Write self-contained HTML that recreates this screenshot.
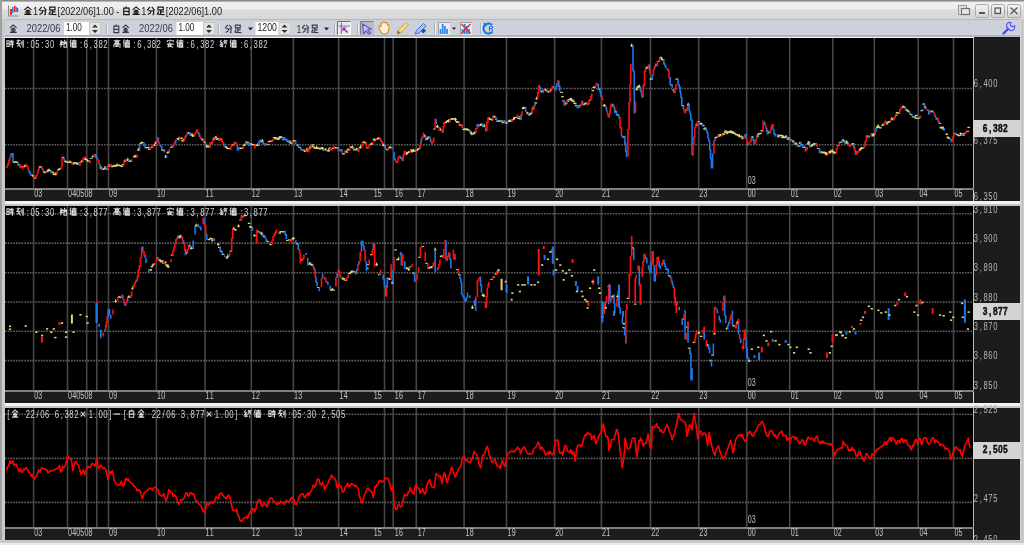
<!DOCTYPE html><html><head><meta charset="utf-8"><style>html,body{margin:0;padding:0;width:1024px;height:545px;overflow:hidden;background:#d4d4d4}svg{display:block;filter:blur(0.35px)}</style></head><body><svg width="1024" height="545" viewBox="0 0 1024 545"><defs><linearGradient id="tb" x1="0" y1="0" x2="0" y2="1"><stop offset="0" stop-color="#f0f0f0"/><stop offset="0.4" stop-color="#ededed"/><stop offset="0.46" stop-color="#dcdcdc"/><stop offset="1" stop-color="#d6d6d6"/></linearGradient><linearGradient id="btn" x1="0" y1="0" x2="0" y2="1"><stop offset="0" stop-color="#f4f4f4"/><stop offset="0.5" stop-color="#e6e6e6"/><stop offset="1" stop-color="#d0d0d0"/></linearGradient></defs><g shape-rendering="crispEdges"><rect x="0" y="0" width="1024" height="545" fill="#d8d8d8"/><rect x="0" y="0" width="1024" height="1" fill="#8a8a8a"/><rect x="1" y="1" width="1022" height="1" fill="#b4b4b4"/><rect x="0" y="0" width="1" height="545" fill="#9a9a9a"/><rect x="1" y="2" width="1022" height="17" fill="url(#tb)"/><rect x="1" y="19" width="1022" height="1" fill="#b8b8b8"/><rect x="5" y="20" width="1015" height="15" fill="#cdd1da"/><rect x="5" y="34" width="1015" height="1" fill="#d2d6dc"/><rect x="5" y="35" width="1015" height="1" fill="#a8b0bc"/><rect x="5" y="36" width="1015" height="1" fill="#b8bcc4"/><rect x="5" y="37" width="969" height="1" fill="#f4f4f4"/><rect x="974" y="37" width="46" height="1" fill="#141414"/></g><g><path d="M8.5,5.5V16H18.5" fill="none" stroke="#8a8a8a" stroke-width="1"/><rect x="10" y="9" width="2" height="6" fill="#ff2020"/><rect x="12" y="7" width="1.6" height="6" fill="#3080ff"/><rect x="14" y="6" width="1.6" height="6" fill="#ff2020"/><rect x="15.6" y="7" width="1.4" height="5" fill="#3080ff"/><rect x="17" y="8" width="1.2" height="4" fill="#ff2020"/></g><path d="M1,4L5,0.5L9,4M3,4.5H7M2,6.3H8M5,4.5V9.3M3,7.3L3.8,8.6M7,7.3L6.2,8.6M1,9.3H9" transform="translate(23.40,6.50) scale(0.892,0.850)" fill="none" stroke="#1a1a1a" stroke-width="1.353"/><text x="39.64" y="0" transform="translate(0,15.00) scale(0.835,1)" font-family="Liberation Sans" font-size="11" fill="#1a1a1a" xml:space="preserve">1</text><path d="M4,0.5L0.8,4.5M6,0.5L9.2,4.5M2.2,5H8V9.2L6.8,9.5M5,5L4.5,7.5L1.5,9.5" transform="translate(38.21,6.50) scale(0.892,0.850)" fill="none" stroke="#1a1a1a" stroke-width="1.353"/><path d="M2,0.7H8V4H2ZM5,4V9M5,6.3H8.5M3,5.5L1,9.5M1.5,9L9.5,9.5" transform="translate(47.91,6.50) scale(0.892,0.850)" fill="none" stroke="#1a1a1a" stroke-width="1.353"/><text x="68.99" y="0" transform="translate(0,15.00) scale(0.835,1)" font-family="Liberation Sans" font-size="11" fill="#1a1a1a" xml:space="preserve">[2022/06]1.00 - </text><path d="M5.2,0L4.2,1.8M2,2H8V9.5H2ZM2,5.7H8" transform="translate(121.95,6.50) scale(0.892,0.850)" fill="none" stroke="#1a1a1a" stroke-width="1.353"/><path d="M1,4L5,0.5L9,4M3,4.5H7M2,6.3H8M5,4.5V9.3M3,7.3L3.8,8.6M7,7.3L6.2,8.6M1,9.3H9" transform="translate(131.65,6.50) scale(0.892,0.850)" fill="none" stroke="#1a1a1a" stroke-width="1.353"/><text x="169.28" y="0" transform="translate(0,15.00) scale(0.835,1)" font-family="Liberation Sans" font-size="11" fill="#1a1a1a" xml:space="preserve">1</text><path d="M4,0.5L0.8,4.5M6,0.5L9.2,4.5M2.2,5H8V9.2L6.8,9.5M5,5L4.5,7.5L1.5,9.5" transform="translate(146.45,6.50) scale(0.892,0.850)" fill="none" stroke="#1a1a1a" stroke-width="1.353"/><path d="M2,0.7H8V4H2ZM5,4V9M5,6.3H8.5M3,5.5L1,9.5M1.5,9L9.5,9.5" transform="translate(156.15,6.50) scale(0.892,0.850)" fill="none" stroke="#1a1a1a" stroke-width="1.353"/><text x="198.63" y="0" transform="translate(0,15.00) scale(0.835,1)" font-family="Liberation Sans" font-size="11" fill="#1a1a1a" xml:space="preserve">[2022/06]1.00</text><g><rect x="958.5" y="5.5" width="8" height="9" fill="#e0e0e0" stroke="#9a9a9a"/><rect x="961.5" y="8.5" width="8" height="6" fill="#e6e6e6" stroke="#707070" stroke-width="1.2"/><rect x="975.5" y="4.5" width="13" height="13" rx="2" fill="url(#btn)" stroke="#a8a8a8"/><rect x="979" y="12" width="6" height="2" fill="#555"/><rect x="991.5" y="4.5" width="13" height="13" rx="2" fill="url(#btn)" stroke="#a8a8a8"/><rect x="995" y="8" width="5.5" height="5.5" fill="none" stroke="#505050" stroke-width="1.2"/><rect x="1007.5" y="4.5" width="13" height="13" rx="2" fill="url(#btn)" stroke="#a8a8a8"/><path d="M1010.5,7.5L1017.5,14M1017.5,7.5L1010.5,14" stroke="#555" stroke-width="1.3"/></g><path d="M1,4L5,0.5L9,4M3,4.5H7M2,6.3H8M5,4.5V9.3M3,7.3L3.8,8.6M7,7.3L6.2,8.6M1,9.3H9" transform="translate(9.00,24.50) scale(0.850,0.850)" fill="none" stroke="#3a3a48" stroke-width="1.412"/><text x="28.19" y="0" transform="translate(0,32.00) scale(0.94,1)" font-family="Liberation Sans" font-size="10" fill="#3a3a48" xml:space="preserve">2022/06</text><rect x="64" y="22" width="37" height="13" fill="#ffffff"/><text x="80.49" y="0" transform="translate(0,30.80) scale(0.82,1)" font-family="Liberation Sans" font-size="10" fill="#202020" xml:space="preserve">1.00</text><rect x="89.5" y="22.5" width="11" height="12" fill="#e4e4e4" stroke="#c8c8c8"/><path d="M92,27.5L95,24.5L98,27.5ZM92,30L95,33L98,30Z" fill="#303030"/><rect x="106" y="23" width="1" height="11" fill="#a8aeb8"/><rect x="107" y="23" width="1" height="11" fill="#eef0f4"/><path d="M5.2,0L4.2,1.8M2,2H8V9.5H2ZM2,5.7H8" transform="translate(112.30,24.50) scale(0.807,0.850)" fill="none" stroke="#3a3a48" stroke-width="1.412"/><path d="M1,4L5,0.5L9,4M3,4.5H7M2,6.3H8M5,4.5V9.3M3,7.3L3.8,8.6M7,7.3L6.2,8.6M1,9.3H9" transform="translate(121.60,24.50) scale(0.807,0.850)" fill="none" stroke="#3a3a48" stroke-width="1.412"/><text x="147.87" y="0" transform="translate(0,32.00) scale(0.94,1)" font-family="Liberation Sans" font-size="10" fill="#3a3a48" xml:space="preserve">2022/06</text><rect x="176.5" y="22" width="38.5" height="13" fill="#ffffff"/><text x="217.68" y="0" transform="translate(0,30.80) scale(0.82,1)" font-family="Liberation Sans" font-size="10" fill="#202020" xml:space="preserve">1.00</text><rect x="203.5" y="22.5" width="11" height="12" fill="#e4e4e4" stroke="#c8c8c8"/><path d="M206,27.5L209,24.5L212,27.5ZM206,30L209,33L212,30Z" fill="#303030"/><rect x="218" y="23" width="1" height="11" fill="#a8aeb8"/><rect x="219" y="23" width="1" height="11" fill="#eef0f4"/><path d="M4,0.5L0.8,4.5M6,0.5L9.2,4.5M2.2,5H8V9.2L6.8,9.5M5,5L4.5,7.5L1.5,9.5" transform="translate(224.50,24.50) scale(0.807,0.850)" fill="none" stroke="#3a3a48" stroke-width="1.412"/><path d="M2,0.7H8V4H2ZM5,4V9M5,6.3H8.5M3,5.5L1,9.5M1.5,9L9.5,9.5" transform="translate(233.80,24.50) scale(0.807,0.850)" fill="none" stroke="#3a3a48" stroke-width="1.412"/><path d="M248,27.5H253L250.5,30.5Z" fill="#202020"/><rect x="255.5" y="22" width="35.0" height="13" fill="#ffffff"/><text x="294.29" y="0" transform="translate(0,30.80) scale(0.875,1)" font-family="Liberation Sans" font-size="10" fill="#202020" xml:space="preserve">1200</text><rect x="279.0" y="22.5" width="11" height="12" fill="#e4e4e4" stroke="#c8c8c8"/><path d="M281.5,27.5L284.5,24.5L287.5,27.5ZM281.5,30L284.5,33L287.5,30Z" fill="#303030"/><text x="336.93" y="0" transform="translate(0,33.00) scale(0.88,1)" font-family="Liberation Sans" font-size="10" fill="#3a3a48" xml:space="preserve">1</text><path d="M4,0.5L0.8,4.5M6,0.5L9.2,4.5M2.2,5H8V9.2L6.8,9.5M5,5L4.5,7.5L1.5,9.5" transform="translate(301.39,24.50) scale(0.807,0.850)" fill="none" stroke="#3a3a48" stroke-width="1.412"/><path d="M2,0.7H8V4H2ZM5,4V9M5,6.3H8.5M3,5.5L1,9.5M1.5,9L9.5,9.5" transform="translate(310.69,24.50) scale(0.807,0.850)" fill="none" stroke="#3a3a48" stroke-width="1.412"/><path d="M324,27.5H329L326.5,30.5Z" fill="#202020"/><rect x="334" y="23" width="1" height="11" fill="#a8aeb8"/><rect x="335" y="23" width="1" height="11" fill="#eef0f4"/><rect x="337" y="21" width="14" height="14" fill="#ecece4"/><path d="M337.5,34.5V21.5H350.5" fill="none" stroke="#707070"/><path d="M338,34.5H350.5V22" fill="none" stroke="#ffffff" stroke-width="0.8"/><path d="M341.3,22.5V34M338.5,26H350" stroke="#7070d8" stroke-width="1.2"/><path d="M347.5,32.5L343.5,28.5" stroke="#a020b0" stroke-width="1.6"/><path d="M342.5,27.5H346.5L342.5,31.5Z" fill="#a020b0"/><rect x="357" y="23" width="1" height="11" fill="#a8aeb8"/><rect x="358" y="23" width="1" height="11" fill="#eef0f4"/><rect x="360" y="21" width="14" height="14" fill="#b8bcc4"/><path d="M360.5,34.5V21.5H373.5" fill="none" stroke="#787c84"/><path d="M362.5,24L371,29L367.5,29.8L370.5,32.8L369,34L366,31L363.5,33.5Z" fill="#c8c0f8" stroke="#6050c8" stroke-width="1.1"/><path d="M379,28C378,26 380,25 381,27L381,23.5C381,22.5 382.5,22.5 382.5,23.5L383,22.5C383,21.5 384.8,21.5 384.8,22.5L385.5,23C385.5,22 387,22 387,23L387.5,25C388,24.5 389.5,24.5 389,26L388.5,31C388,33 386.5,34 384,34C381.5,34 380.5,32 379,28Z" fill="#fff2d8" stroke="#d89030" stroke-width="1.1"/><path d="M397,34L398,30.5L406,22.5L408.5,25L400.5,33Z" fill="#f8d890" stroke="#e0a030" stroke-width="1"/><path d="M397,34L398,30.5L400.5,33Z" fill="#a06020"/><path d="M415,34L416.5,30.5L423.5,23.5L426,26L419,33Z" fill="#a8c8f8" stroke="#3870d8" stroke-width="1"/><path d="M421,31L424,28.5L426,31L423,33.5Z" fill="#2050a0"/><rect x="434" y="23" width="1" height="11" fill="#a8aeb8"/><rect x="435" y="23" width="1" height="11" fill="#eef0f4"/><rect x="438" y="22" width="12" height="13" fill="#e8eaee"/><path d="M438.5,35V22.5H450" fill="none" stroke="#909090" stroke-width="0.8"/><path d="M440.5,34V29M442.7,34V24M444.9,34V26M447.1,34V29" stroke="#2888f0" stroke-width="1.7"/><path d="M452,27.5H456L454,30Z" fill="#202020"/><rect x="460" y="22" width="12" height="13" fill="#e8eaee"/><path d="M460.5,35V22.5H472" fill="none" stroke="#909090" stroke-width="0.8"/><path d="M462.5,34V29M464.7,34V24M466.9,34V26M469.1,34V29" stroke="#2888f0" stroke-width="1.7"/><path d="M461.5,24L470.5,33.5M470.5,24L461.5,33.5" stroke="#e83030" stroke-width="1.4"/><rect x="480" y="23" width="1" height="11" fill="#a8aeb8"/><rect x="481" y="23" width="1" height="11" fill="#eef0f4"/><path d="M492,25A5,5 0 1 0 492.5,31.5" fill="none" stroke="#1878e0" stroke-width="2"/><path d="M483.5,22.5L487.5,25L484,27.5Z" fill="#1878e0"/><text x="488.5" y="31" font-family="Liberation Sans" font-size="7" font-weight="bold" fill="#1878e0">R</text><path d="M1003.5,33.5L1009.5,27.5" stroke="#4848f0" stroke-width="2.4" stroke-linecap="round"/><path d="M1008.5,28.5A3,3 0 0 1 1011,22.8L1010.2,25.3L1012.2,26.8L1014.5,25.8A3,3 0 0 1 1008.5,28.5Z" fill="#d0d0ff" stroke="#5050f0" stroke-width="1.1"/><g shape-rendering="crispEdges"><rect x="5" y="38" width="968" height="150" fill="#000"/><rect x="973" y="38" width="1" height="152" fill="#b8b8b8"/><rect x="974" y="38" width="46" height="163" fill="#1c1c1c"/><rect x="5" y="188" width="969" height="2" fill="#808080"/><rect x="5" y="190" width="968" height="11" fill="#1c1c1c"/></g><path d="M33.60,38V188M67.50,38V188M86.70,38V188M96.80,38V188M108.50,38V188M156.40,38V188M205.00,38V188M251.30,38V188M293.40,38V188M338.60,38V188M384.50,38V188M393.20,38V188M416.30,38V188M464.10,38V188M506.50,38V188M554.60,38V188M601.40,38V188M650.50,38V188M698.70,38V188M746.70,38V188M789.70,38V188M832.80,38V188M874.30,38V188M918.20,38V188M953.50,38V188" stroke="#464646" stroke-width="1.6"/><path d="M5,88.50H973M5,144.75H973" stroke="#5c5c5c" stroke-width="1.6" stroke-dasharray="1.7,1.05"/><text x="53.31 59.34" y="0" transform="translate(0,196.70) scale(0.68,1)" text-anchor="middle" font-family="Liberation Sans" font-size="10.5" font-weight="normal" fill="#c4c4c4">03</text><text x="103.01 109.04 115.07 121.10 127.13 133.16" y="0" transform="translate(0,196.70) scale(0.68,1)" text-anchor="middle" font-family="Liberation Sans" font-size="10.5" font-weight="normal" fill="#c4c4c4">040508</text><text x="163.31 169.34" y="0" transform="translate(0,196.70) scale(0.68,1)" text-anchor="middle" font-family="Liberation Sans" font-size="10.5" font-weight="normal" fill="#c4c4c4">09</text><text x="233.90 239.93" y="0" transform="translate(0,196.70) scale(0.68,1)" text-anchor="middle" font-family="Liberation Sans" font-size="10.5" font-weight="normal" fill="#c4c4c4">10</text><text x="305.22 311.25" y="0" transform="translate(0,196.70) scale(0.68,1)" text-anchor="middle" font-family="Liberation Sans" font-size="10.5" font-weight="normal" fill="#c4c4c4">11</text><text x="373.31 379.34" y="0" transform="translate(0,196.70) scale(0.68,1)" text-anchor="middle" font-family="Liberation Sans" font-size="10.5" font-weight="normal" fill="#c4c4c4">12</text><text x="435.37 441.40" y="0" transform="translate(0,196.70) scale(0.68,1)" text-anchor="middle" font-family="Liberation Sans" font-size="10.5" font-weight="normal" fill="#c4c4c4">13</text><text x="502.28 508.31" y="0" transform="translate(0,196.70) scale(0.68,1)" text-anchor="middle" font-family="Liberation Sans" font-size="10.5" font-weight="normal" fill="#c4c4c4">14</text><text x="552.57 558.60" y="0" transform="translate(0,196.70) scale(0.68,1)" text-anchor="middle" font-family="Liberation Sans" font-size="10.5" font-weight="normal" fill="#c4c4c4">15</text><text x="583.60 589.63" y="0" transform="translate(0,196.70) scale(0.68,1)" text-anchor="middle" font-family="Liberation Sans" font-size="10.5" font-weight="normal" fill="#c4c4c4">16</text><text x="617.13 623.16" y="0" transform="translate(0,196.70) scale(0.68,1)" text-anchor="middle" font-family="Liberation Sans" font-size="10.5" font-weight="normal" fill="#c4c4c4">17</text><text x="687.57 693.60" y="0" transform="translate(0,196.70) scale(0.68,1)" text-anchor="middle" font-family="Liberation Sans" font-size="10.5" font-weight="normal" fill="#c4c4c4">18</text><text x="749.34 755.37" y="0" transform="translate(0,196.70) scale(0.68,1)" text-anchor="middle" font-family="Liberation Sans" font-size="10.5" font-weight="normal" fill="#c4c4c4">19</text><text x="819.49 825.51" y="0" transform="translate(0,196.70) scale(0.68,1)" text-anchor="middle" font-family="Liberation Sans" font-size="10.5" font-weight="normal" fill="#c4c4c4">20</text><text x="888.31 894.34" y="0" transform="translate(0,196.70) scale(0.68,1)" text-anchor="middle" font-family="Liberation Sans" font-size="10.5" font-weight="normal" fill="#c4c4c4">21</text><text x="960.66 966.69" y="0" transform="translate(0,196.70) scale(0.68,1)" text-anchor="middle" font-family="Liberation Sans" font-size="10.5" font-weight="normal" fill="#c4c4c4">22</text><text x="1031.40 1037.43" y="0" transform="translate(0,196.70) scale(0.68,1)" text-anchor="middle" font-family="Liberation Sans" font-size="10.5" font-weight="normal" fill="#c4c4c4">23</text><text x="1102.43 1108.46" y="0" transform="translate(0,196.70) scale(0.68,1)" text-anchor="middle" font-family="Liberation Sans" font-size="10.5" font-weight="normal" fill="#c4c4c4">00</text><text x="1165.66 1171.69" y="0" transform="translate(0,196.70) scale(0.68,1)" text-anchor="middle" font-family="Liberation Sans" font-size="10.5" font-weight="normal" fill="#c4c4c4">01</text><text x="1228.90 1234.93" y="0" transform="translate(0,196.70) scale(0.68,1)" text-anchor="middle" font-family="Liberation Sans" font-size="10.5" font-weight="normal" fill="#c4c4c4">02</text><text x="1290.07 1296.10" y="0" transform="translate(0,196.70) scale(0.68,1)" text-anchor="middle" font-family="Liberation Sans" font-size="10.5" font-weight="normal" fill="#c4c4c4">03</text><text x="1355.07 1361.10" y="0" transform="translate(0,196.70) scale(0.68,1)" text-anchor="middle" font-family="Liberation Sans" font-size="10.5" font-weight="normal" fill="#c4c4c4">04</text><text x="1406.54 1412.57" y="0" transform="translate(0,196.70) scale(0.68,1)" text-anchor="middle" font-family="Liberation Sans" font-size="10.5" font-weight="normal" fill="#c4c4c4">05</text><text x="1355.45 1362.19 1368.92 1375.66 1382.40" y="0" transform="translate(0,87.00) scale(0.72,1)" text-anchor="middle" font-family="Liberation Sans" font-size="10.5" font-weight="normal" fill="#b8b8b8">6,400</text><text x="1355.45 1362.19 1368.92 1375.66 1382.40" y="0" transform="translate(0,144.00) scale(0.72,1)" text-anchor="middle" font-family="Liberation Sans" font-size="10.5" font-weight="normal" fill="#b8b8b8">6,375</text><text x="1355.45 1362.19 1368.92 1375.66 1382.40" y="0" transform="translate(0,200.00) scale(0.72,1)" text-anchor="middle" font-family="Liberation Sans" font-size="10.5" font-weight="normal" fill="#b8b8b8">6,350</text><rect x="973" y="120.30000000000001" width="47" height="17" fill="#d4d4d4" shape-rendering="crispEdges"/><text x="1231.31 1237.69 1244.06 1250.44 1256.81" y="0" transform="translate(0,132.00) scale(0.8,1)" text-anchor="middle" font-family="Liberation Sans" font-size="10.5" font-weight="bold" fill="#101010" stroke="#101010" stroke-width="0.45">6,382</text><path d="M0.5,1.5H3.5V8.5H0.5ZM0.5,5H3.5M4.5,2.3H9.5M7,0.3V4M4.5,4H9.5M4.5,6H9.5M8,4.5V9.5L7,9.5M5.5,7.3L6.3,8.3" transform="translate(6.50,39.50) scale(0.754,0.820)" fill="none" stroke="#d6d6d6" stroke-width="1.402"/><path d="M3,0V1M0.5,1.5H6M3,2L1,4.8H5L1.5,8.5M3.5,6.5L6,9.5M7.5,2V7M9.3,0.5V9.5L8.3,9.5" transform="translate(16.20,39.50) scale(0.754,0.820)" fill="none" stroke="#d6d6d6" stroke-width="1.402"/><path d="M2,0.5L0.5,6H4.5M3.2,2L1,9.5M0.5,3.5H4.5M7,0.5L5.2,3.5H9.3M8,2.5L9.5,3.5M5.5,5H9V9.5H5.5Z" transform="translate(59.85,39.50) scale(0.754,0.820)" fill="none" stroke="#d6d6d6" stroke-width="1.402"/><path d="M2,0L0.5,4M1.5,3V9.5M3,1.5H9.5M6,0V3M4,3H8.5V8.3H4ZM4,4.8H8.5M4,6.5H8.5M3.5,3V9.5H9.5" transform="translate(69.55,39.50) scale(0.754,0.820)" fill="none" stroke="#d6d6d6" stroke-width="1.402"/><path d="M5,0V1.3M0.5,1.5H9.5M3,2.5H7V4H3ZM1,5.2V9.5M1,5.2H9V9.5L8,9.5M3.5,6.5H6.5V8.5H3.5Z" transform="translate(113.20,39.50) scale(0.754,0.820)" fill="none" stroke="#d6d6d6" stroke-width="1.402"/><path d="M2,0L0.5,4M1.5,3V9.5M3,1.5H9.5M6,0V3M4,3H8.5V8.3H4ZM4,4.8H8.5M4,6.5H8.5M3.5,3V9.5H9.5" transform="translate(122.90,39.50) scale(0.754,0.820)" fill="none" stroke="#d6d6d6" stroke-width="1.402"/><path d="M5,0V1.5M1,3V1.5H9V3M4.5,3.5L2.2,7.8L9,9.5M0.5,5.7H9.5M7.2,5.7L1.5,9.5" transform="translate(166.55,39.50) scale(0.754,0.820)" fill="none" stroke="#d6d6d6" stroke-width="1.402"/><path d="M2,0L0.5,4M1.5,3V9.5M3,1.5H9.5M6,0V3M4,3H8.5V8.3H4ZM4,4.8H8.5M4,6.5H8.5M3.5,3V9.5H9.5" transform="translate(176.25,39.50) scale(0.754,0.820)" fill="none" stroke="#d6d6d6" stroke-width="1.402"/><path d="M2,0.5L0.5,3L3,4L0.5,6.5H4.2M3.3,5.3L4.2,6.5M2.4,6.5V9.5M1,7.8L0.5,9M3.5,7.8L4.2,9M6.5,0.5L5,3M6,1.5H9L5,5.2M6.8,3L9.5,5.2M7,6.5L8,7.2M6.5,8.5L8,9.5" transform="translate(219.90,39.50) scale(0.754,0.820)" fill="none" stroke="#d6d6d6" stroke-width="1.402"/><path d="M2,0L0.5,4M1.5,3V9.5M3,1.5H9.5M6,0V3M4,3H8.5V8.3H4ZM4,4.8H8.5M4,6.5H8.5M3.5,3V9.5H9.5" transform="translate(229.60,39.50) scale(0.754,0.820)" fill="none" stroke="#d6d6d6" stroke-width="1.402"/><text x="37.60 44.16 50.71 57.26 63.82 70.37 109.70 116.25 122.80 129.36 135.91 142.47 181.79 188.34 194.90 201.45 208.01 214.56 253.89 260.44 266.99 273.55 280.10 286.66 325.98 332.53 339.09 345.64 352.20 358.75" y="0" transform="translate(0,47.70) scale(0.74,1)" text-anchor="middle" font-family="Liberation Sans" font-size="10.5" font-weight="normal" fill="#d6d6d6">:05:30:6,382:6,382:6,382:6,382</text><g shape-rendering="crispEdges"><rect x="5" y="201" width="1015" height="3" fill="#f2f2f2"/><rect x="5" y="204" width="1015" height="2" fill="#c4c4c4"/></g><g shape-rendering="crispEdges"><rect x="5" y="206" width="968" height="184" fill="#000"/><rect x="973" y="206" width="1" height="186" fill="#b8b8b8"/><rect x="974" y="206" width="46" height="197" fill="#1c1c1c"/><rect x="5" y="390" width="969" height="2" fill="#808080"/><rect x="5" y="392" width="968" height="11" fill="#1c1c1c"/></g><path d="M33.60,206V390M67.50,206V390M86.70,206V390M96.80,206V390M108.50,206V390M156.40,206V390M205.00,206V390M251.30,206V390M293.40,206V390M338.60,206V390M384.50,206V390M393.20,206V390M416.30,206V390M464.10,206V390M506.50,206V390M554.60,206V390M601.40,206V390M650.50,206V390M698.70,206V390M746.70,206V390M789.70,206V390M832.80,206V390M874.30,206V390M918.20,206V390M953.50,206V390" stroke="#464646" stroke-width="1.6"/><path d="M5,213.80H973M5,243.10H973M5,272.80H973M5,302.00H973M5,331.20H973M5,360.60H973" stroke="#5c5c5c" stroke-width="1.6" stroke-dasharray="1.7,1.05"/><text x="53.31 59.34" y="0" transform="translate(0,398.70) scale(0.68,1)" text-anchor="middle" font-family="Liberation Sans" font-size="10.5" font-weight="normal" fill="#c4c4c4">03</text><text x="103.01 109.04 115.07 121.10 127.13 133.16" y="0" transform="translate(0,398.70) scale(0.68,1)" text-anchor="middle" font-family="Liberation Sans" font-size="10.5" font-weight="normal" fill="#c4c4c4">040508</text><text x="163.31 169.34" y="0" transform="translate(0,398.70) scale(0.68,1)" text-anchor="middle" font-family="Liberation Sans" font-size="10.5" font-weight="normal" fill="#c4c4c4">09</text><text x="233.90 239.93" y="0" transform="translate(0,398.70) scale(0.68,1)" text-anchor="middle" font-family="Liberation Sans" font-size="10.5" font-weight="normal" fill="#c4c4c4">10</text><text x="305.22 311.25" y="0" transform="translate(0,398.70) scale(0.68,1)" text-anchor="middle" font-family="Liberation Sans" font-size="10.5" font-weight="normal" fill="#c4c4c4">11</text><text x="373.31 379.34" y="0" transform="translate(0,398.70) scale(0.68,1)" text-anchor="middle" font-family="Liberation Sans" font-size="10.5" font-weight="normal" fill="#c4c4c4">12</text><text x="435.37 441.40" y="0" transform="translate(0,398.70) scale(0.68,1)" text-anchor="middle" font-family="Liberation Sans" font-size="10.5" font-weight="normal" fill="#c4c4c4">13</text><text x="502.28 508.31" y="0" transform="translate(0,398.70) scale(0.68,1)" text-anchor="middle" font-family="Liberation Sans" font-size="10.5" font-weight="normal" fill="#c4c4c4">14</text><text x="552.57 558.60" y="0" transform="translate(0,398.70) scale(0.68,1)" text-anchor="middle" font-family="Liberation Sans" font-size="10.5" font-weight="normal" fill="#c4c4c4">15</text><text x="583.60 589.63" y="0" transform="translate(0,398.70) scale(0.68,1)" text-anchor="middle" font-family="Liberation Sans" font-size="10.5" font-weight="normal" fill="#c4c4c4">16</text><text x="617.13 623.16" y="0" transform="translate(0,398.70) scale(0.68,1)" text-anchor="middle" font-family="Liberation Sans" font-size="10.5" font-weight="normal" fill="#c4c4c4">17</text><text x="687.57 693.60" y="0" transform="translate(0,398.70) scale(0.68,1)" text-anchor="middle" font-family="Liberation Sans" font-size="10.5" font-weight="normal" fill="#c4c4c4">18</text><text x="749.34 755.37" y="0" transform="translate(0,398.70) scale(0.68,1)" text-anchor="middle" font-family="Liberation Sans" font-size="10.5" font-weight="normal" fill="#c4c4c4">19</text><text x="819.49 825.51" y="0" transform="translate(0,398.70) scale(0.68,1)" text-anchor="middle" font-family="Liberation Sans" font-size="10.5" font-weight="normal" fill="#c4c4c4">20</text><text x="888.31 894.34" y="0" transform="translate(0,398.70) scale(0.68,1)" text-anchor="middle" font-family="Liberation Sans" font-size="10.5" font-weight="normal" fill="#c4c4c4">21</text><text x="960.66 966.69" y="0" transform="translate(0,398.70) scale(0.68,1)" text-anchor="middle" font-family="Liberation Sans" font-size="10.5" font-weight="normal" fill="#c4c4c4">22</text><text x="1031.40 1037.43" y="0" transform="translate(0,398.70) scale(0.68,1)" text-anchor="middle" font-family="Liberation Sans" font-size="10.5" font-weight="normal" fill="#c4c4c4">23</text><text x="1102.43 1108.46" y="0" transform="translate(0,398.70) scale(0.68,1)" text-anchor="middle" font-family="Liberation Sans" font-size="10.5" font-weight="normal" fill="#c4c4c4">00</text><text x="1165.66 1171.69" y="0" transform="translate(0,398.70) scale(0.68,1)" text-anchor="middle" font-family="Liberation Sans" font-size="10.5" font-weight="normal" fill="#c4c4c4">01</text><text x="1228.90 1234.93" y="0" transform="translate(0,398.70) scale(0.68,1)" text-anchor="middle" font-family="Liberation Sans" font-size="10.5" font-weight="normal" fill="#c4c4c4">02</text><text x="1290.07 1296.10" y="0" transform="translate(0,398.70) scale(0.68,1)" text-anchor="middle" font-family="Liberation Sans" font-size="10.5" font-weight="normal" fill="#c4c4c4">03</text><text x="1355.07 1361.10" y="0" transform="translate(0,398.70) scale(0.68,1)" text-anchor="middle" font-family="Liberation Sans" font-size="10.5" font-weight="normal" fill="#c4c4c4">04</text><text x="1406.54 1412.57" y="0" transform="translate(0,398.70) scale(0.68,1)" text-anchor="middle" font-family="Liberation Sans" font-size="10.5" font-weight="normal" fill="#c4c4c4">05</text><text x="1355.45 1362.19 1368.92 1375.66 1382.40" y="0" transform="translate(0,213.00) scale(0.72,1)" text-anchor="middle" font-family="Liberation Sans" font-size="10.5" font-weight="normal" fill="#b8b8b8">3,910</text><text x="1355.45 1362.19 1368.92 1375.66 1382.40" y="0" transform="translate(0,242.00) scale(0.72,1)" text-anchor="middle" font-family="Liberation Sans" font-size="10.5" font-weight="normal" fill="#b8b8b8">3,900</text><text x="1355.45 1362.19 1368.92 1375.66 1382.40" y="0" transform="translate(0,271.00) scale(0.72,1)" text-anchor="middle" font-family="Liberation Sans" font-size="10.5" font-weight="normal" fill="#b8b8b8">3,890</text><text x="1355.45 1362.19 1368.92 1375.66 1382.40" y="0" transform="translate(0,301.00) scale(0.72,1)" text-anchor="middle" font-family="Liberation Sans" font-size="10.5" font-weight="normal" fill="#b8b8b8">3,880</text><text x="1355.45 1362.19 1368.92 1375.66 1382.40" y="0" transform="translate(0,330.00) scale(0.72,1)" text-anchor="middle" font-family="Liberation Sans" font-size="10.5" font-weight="normal" fill="#b8b8b8">3,870</text><text x="1355.45 1362.19 1368.92 1375.66 1382.40" y="0" transform="translate(0,359.00) scale(0.72,1)" text-anchor="middle" font-family="Liberation Sans" font-size="10.5" font-weight="normal" fill="#b8b8b8">3,860</text><text x="1355.45 1362.19 1368.92 1375.66 1382.40" y="0" transform="translate(0,389.00) scale(0.72,1)" text-anchor="middle" font-family="Liberation Sans" font-size="10.5" font-weight="normal" fill="#b8b8b8">3,850</text><rect x="973" y="303.0" width="47" height="17" fill="#d4d4d4" shape-rendering="crispEdges"/><text x="1231.31 1237.69 1244.06 1250.44 1256.81" y="0" transform="translate(0,314.70) scale(0.8,1)" text-anchor="middle" font-family="Liberation Sans" font-size="10.5" font-weight="bold" fill="#101010" stroke="#101010" stroke-width="0.45">3,877</text><path d="M0.5,1.5H3.5V8.5H0.5ZM0.5,5H3.5M4.5,2.3H9.5M7,0.3V4M4.5,4H9.5M4.5,6H9.5M8,4.5V9.5L7,9.5M5.5,7.3L6.3,8.3" transform="translate(6.50,207.50) scale(0.754,0.820)" fill="none" stroke="#d6d6d6" stroke-width="1.402"/><path d="M3,0V1M0.5,1.5H6M3,2L1,4.8H5L1.5,8.5M3.5,6.5L6,9.5M7.5,2V7M9.3,0.5V9.5L8.3,9.5" transform="translate(16.20,207.50) scale(0.754,0.820)" fill="none" stroke="#d6d6d6" stroke-width="1.402"/><path d="M2,0.5L0.5,6H4.5M3.2,2L1,9.5M0.5,3.5H4.5M7,0.5L5.2,3.5H9.3M8,2.5L9.5,3.5M5.5,5H9V9.5H5.5Z" transform="translate(59.85,207.50) scale(0.754,0.820)" fill="none" stroke="#d6d6d6" stroke-width="1.402"/><path d="M2,0L0.5,4M1.5,3V9.5M3,1.5H9.5M6,0V3M4,3H8.5V8.3H4ZM4,4.8H8.5M4,6.5H8.5M3.5,3V9.5H9.5" transform="translate(69.55,207.50) scale(0.754,0.820)" fill="none" stroke="#d6d6d6" stroke-width="1.402"/><path d="M5,0V1.3M0.5,1.5H9.5M3,2.5H7V4H3ZM1,5.2V9.5M1,5.2H9V9.5L8,9.5M3.5,6.5H6.5V8.5H3.5Z" transform="translate(113.20,207.50) scale(0.754,0.820)" fill="none" stroke="#d6d6d6" stroke-width="1.402"/><path d="M2,0L0.5,4M1.5,3V9.5M3,1.5H9.5M6,0V3M4,3H8.5V8.3H4ZM4,4.8H8.5M4,6.5H8.5M3.5,3V9.5H9.5" transform="translate(122.90,207.50) scale(0.754,0.820)" fill="none" stroke="#d6d6d6" stroke-width="1.402"/><path d="M5,0V1.5M1,3V1.5H9V3M4.5,3.5L2.2,7.8L9,9.5M0.5,5.7H9.5M7.2,5.7L1.5,9.5" transform="translate(166.55,207.50) scale(0.754,0.820)" fill="none" stroke="#d6d6d6" stroke-width="1.402"/><path d="M2,0L0.5,4M1.5,3V9.5M3,1.5H9.5M6,0V3M4,3H8.5V8.3H4ZM4,4.8H8.5M4,6.5H8.5M3.5,3V9.5H9.5" transform="translate(176.25,207.50) scale(0.754,0.820)" fill="none" stroke="#d6d6d6" stroke-width="1.402"/><path d="M2,0.5L0.5,3L3,4L0.5,6.5H4.2M3.3,5.3L4.2,6.5M2.4,6.5V9.5M1,7.8L0.5,9M3.5,7.8L4.2,9M6.5,0.5L5,3M6,1.5H9L5,5.2M6.8,3L9.5,5.2M7,6.5L8,7.2M6.5,8.5L8,9.5" transform="translate(219.90,207.50) scale(0.754,0.820)" fill="none" stroke="#d6d6d6" stroke-width="1.402"/><path d="M2,0L0.5,4M1.5,3V9.5M3,1.5H9.5M6,0V3M4,3H8.5V8.3H4ZM4,4.8H8.5M4,6.5H8.5M3.5,3V9.5H9.5" transform="translate(229.60,207.50) scale(0.754,0.820)" fill="none" stroke="#d6d6d6" stroke-width="1.402"/><text x="37.60 44.16 50.71 57.26 63.82 70.37 109.70 116.25 122.80 129.36 135.91 142.47 181.79 188.34 194.90 201.45 208.01 214.56 253.89 260.44 266.99 273.55 280.10 286.66 325.98 332.53 339.09 345.64 352.20 358.75" y="0" transform="translate(0,215.70) scale(0.74,1)" text-anchor="middle" font-family="Liberation Sans" font-size="10.5" font-weight="normal" fill="#d6d6d6">:05:30:3,877:3,877:3,877:3,877</text><g shape-rendering="crispEdges"><rect x="5" y="403" width="1015" height="3" fill="#f2f2f2"/><rect x="5" y="406" width="1015" height="2" fill="#c4c4c4"/></g><g shape-rendering="crispEdges"><rect x="5" y="408" width="968" height="119" fill="#000"/><rect x="973" y="408" width="1" height="121" fill="#b8b8b8"/><rect x="974" y="408" width="46" height="132" fill="#1c1c1c"/><rect x="5" y="527" width="969" height="2" fill="#808080"/><rect x="5" y="529" width="968" height="11" fill="#1c1c1c"/></g><path d="M33.60,408V527M67.50,408V527M86.70,408V527M96.80,408V527M108.50,408V527M156.40,408V527M205.00,408V527M251.30,408V527M293.40,408V527M338.60,408V527M384.50,408V527M393.20,408V527M416.30,408V527M464.10,408V527M506.50,408V527M554.60,408V527M601.40,408V527M650.50,408V527M698.70,408V527M746.70,408V527M789.70,408V527M832.80,408V527M874.30,408V527M918.20,408V527M953.50,408V527" stroke="#464646" stroke-width="1.6"/><path d="M5,414.30H973M5,458.40H973M5,502.40H973" stroke="#5c5c5c" stroke-width="1.6" stroke-dasharray="1.7,1.05"/><text x="53.31 59.34" y="0" transform="translate(0,535.70) scale(0.68,1)" text-anchor="middle" font-family="Liberation Sans" font-size="10.5" font-weight="normal" fill="#c4c4c4">03</text><text x="103.01 109.04 115.07 121.10 127.13 133.16" y="0" transform="translate(0,535.70) scale(0.68,1)" text-anchor="middle" font-family="Liberation Sans" font-size="10.5" font-weight="normal" fill="#c4c4c4">040508</text><text x="163.31 169.34" y="0" transform="translate(0,535.70) scale(0.68,1)" text-anchor="middle" font-family="Liberation Sans" font-size="10.5" font-weight="normal" fill="#c4c4c4">09</text><text x="233.90 239.93" y="0" transform="translate(0,535.70) scale(0.68,1)" text-anchor="middle" font-family="Liberation Sans" font-size="10.5" font-weight="normal" fill="#c4c4c4">10</text><text x="305.22 311.25" y="0" transform="translate(0,535.70) scale(0.68,1)" text-anchor="middle" font-family="Liberation Sans" font-size="10.5" font-weight="normal" fill="#c4c4c4">11</text><text x="373.31 379.34" y="0" transform="translate(0,535.70) scale(0.68,1)" text-anchor="middle" font-family="Liberation Sans" font-size="10.5" font-weight="normal" fill="#c4c4c4">12</text><text x="435.37 441.40" y="0" transform="translate(0,535.70) scale(0.68,1)" text-anchor="middle" font-family="Liberation Sans" font-size="10.5" font-weight="normal" fill="#c4c4c4">13</text><text x="502.28 508.31" y="0" transform="translate(0,535.70) scale(0.68,1)" text-anchor="middle" font-family="Liberation Sans" font-size="10.5" font-weight="normal" fill="#c4c4c4">14</text><text x="552.57 558.60" y="0" transform="translate(0,535.70) scale(0.68,1)" text-anchor="middle" font-family="Liberation Sans" font-size="10.5" font-weight="normal" fill="#c4c4c4">15</text><text x="583.60 589.63" y="0" transform="translate(0,535.70) scale(0.68,1)" text-anchor="middle" font-family="Liberation Sans" font-size="10.5" font-weight="normal" fill="#c4c4c4">16</text><text x="617.13 623.16" y="0" transform="translate(0,535.70) scale(0.68,1)" text-anchor="middle" font-family="Liberation Sans" font-size="10.5" font-weight="normal" fill="#c4c4c4">17</text><text x="687.57 693.60" y="0" transform="translate(0,535.70) scale(0.68,1)" text-anchor="middle" font-family="Liberation Sans" font-size="10.5" font-weight="normal" fill="#c4c4c4">18</text><text x="749.34 755.37" y="0" transform="translate(0,535.70) scale(0.68,1)" text-anchor="middle" font-family="Liberation Sans" font-size="10.5" font-weight="normal" fill="#c4c4c4">19</text><text x="819.49 825.51" y="0" transform="translate(0,535.70) scale(0.68,1)" text-anchor="middle" font-family="Liberation Sans" font-size="10.5" font-weight="normal" fill="#c4c4c4">20</text><text x="888.31 894.34" y="0" transform="translate(0,535.70) scale(0.68,1)" text-anchor="middle" font-family="Liberation Sans" font-size="10.5" font-weight="normal" fill="#c4c4c4">21</text><text x="960.66 966.69" y="0" transform="translate(0,535.70) scale(0.68,1)" text-anchor="middle" font-family="Liberation Sans" font-size="10.5" font-weight="normal" fill="#c4c4c4">22</text><text x="1031.40 1037.43" y="0" transform="translate(0,535.70) scale(0.68,1)" text-anchor="middle" font-family="Liberation Sans" font-size="10.5" font-weight="normal" fill="#c4c4c4">23</text><text x="1102.43 1108.46" y="0" transform="translate(0,535.70) scale(0.68,1)" text-anchor="middle" font-family="Liberation Sans" font-size="10.5" font-weight="normal" fill="#c4c4c4">00</text><text x="1165.66 1171.69" y="0" transform="translate(0,535.70) scale(0.68,1)" text-anchor="middle" font-family="Liberation Sans" font-size="10.5" font-weight="normal" fill="#c4c4c4">01</text><text x="1228.90 1234.93" y="0" transform="translate(0,535.70) scale(0.68,1)" text-anchor="middle" font-family="Liberation Sans" font-size="10.5" font-weight="normal" fill="#c4c4c4">02</text><text x="1290.07 1296.10" y="0" transform="translate(0,535.70) scale(0.68,1)" text-anchor="middle" font-family="Liberation Sans" font-size="10.5" font-weight="normal" fill="#c4c4c4">03</text><text x="1355.07 1361.10" y="0" transform="translate(0,535.70) scale(0.68,1)" text-anchor="middle" font-family="Liberation Sans" font-size="10.5" font-weight="normal" fill="#c4c4c4">04</text><text x="1406.54 1412.57" y="0" transform="translate(0,535.70) scale(0.68,1)" text-anchor="middle" font-family="Liberation Sans" font-size="10.5" font-weight="normal" fill="#c4c4c4">05</text><text x="1355.45 1362.19 1368.92 1375.66 1382.40" y="0" transform="translate(0,413.00) scale(0.72,1)" text-anchor="middle" font-family="Liberation Sans" font-size="10.5" font-weight="normal" fill="#b8b8b8">2,525</text><text x="1355.45 1362.19 1368.92 1375.66 1382.40" y="0" transform="translate(0,502.00) scale(0.72,1)" text-anchor="middle" font-family="Liberation Sans" font-size="10.5" font-weight="normal" fill="#b8b8b8">2,475</text><text x="1355.45 1362.19 1368.92 1375.66 1382.40" y="0" transform="translate(0,543.00) scale(0.72,1)" text-anchor="middle" font-family="Liberation Sans" font-size="10.5" font-weight="normal" fill="#b8b8b8">2,450</text><rect x="973" y="441.5" width="47" height="17" fill="#d4d4d4" shape-rendering="crispEdges"/><text x="1231.31 1237.69 1244.06 1250.44 1256.81" y="0" transform="translate(0,453.20) scale(0.8,1)" text-anchor="middle" font-family="Liberation Sans" font-size="10.5" font-weight="bold" fill="#101010" stroke="#101010" stroke-width="0.45">2,505</text><path d="M1,4L5,0.5L9,4M3,4.5H7M2,6.3H8M5,4.5V9.3M3,7.3L3.8,8.6M7,7.3L6.2,8.6M1,9.3H9" transform="translate(11.35,409.50) scale(0.754,0.820)" fill="none" stroke="#d6d6d6" stroke-width="1.402"/><path d="M2,2.5L8,8.5M8,2.5L2,8.5" transform="translate(79.25,409.50) scale(0.754,0.820)" fill="none" stroke="#d6d6d6" stroke-width="1.402"/><path d="M1,5.5H9" transform="translate(113.20,409.50) scale(0.754,0.820)" fill="none" stroke="#d6d6d6" stroke-width="1.402"/><path d="M5.2,0L4.2,1.8M2,2H8V9.5H2ZM2,5.7H8" transform="translate(127.75,409.50) scale(0.754,0.820)" fill="none" stroke="#d6d6d6" stroke-width="1.402"/><path d="M1,4L5,0.5L9,4M3,4.5H7M2,6.3H8M5,4.5V9.3M3,7.3L3.8,8.6M7,7.3L6.2,8.6M1,9.3H9" transform="translate(137.45,409.50) scale(0.754,0.820)" fill="none" stroke="#d6d6d6" stroke-width="1.402"/><path d="M2,2.5L8,8.5M8,2.5L2,8.5" transform="translate(205.35,409.50) scale(0.754,0.820)" fill="none" stroke="#d6d6d6" stroke-width="1.402"/><path d="M2,0.5L0.5,3L3,4L0.5,6.5H4.2M3.3,5.3L4.2,6.5M2.4,6.5V9.5M1,7.8L0.5,9M3.5,7.8L4.2,9M6.5,0.5L5,3M6,1.5H9L5,5.2M6.8,3L9.5,5.2M7,6.5L8,7.2M6.5,8.5L8,9.5" transform="translate(244.15,409.50) scale(0.754,0.820)" fill="none" stroke="#d6d6d6" stroke-width="1.402"/><path d="M2,0L0.5,4M1.5,3V9.5M3,1.5H9.5M6,0V3M4,3H8.5V8.3H4ZM4,4.8H8.5M4,6.5H8.5M3.5,3V9.5H9.5" transform="translate(253.85,409.50) scale(0.754,0.820)" fill="none" stroke="#d6d6d6" stroke-width="1.402"/><path d="M0.5,1.5H3.5V8.5H0.5ZM0.5,5H3.5M4.5,2.3H9.5M7,0.3V4M4.5,4H9.5M4.5,6H9.5M8,4.5V9.5L7,9.5M5.5,7.3L6.3,8.3" transform="translate(268.40,409.50) scale(0.754,0.820)" fill="none" stroke="#d6d6d6" stroke-width="1.402"/><path d="M3,0V1M0.5,1.5H6M3,2L1,4.8H5L1.5,8.5M3.5,6.5L6,9.5M7.5,2V7M9.3,0.5V9.5L8.3,9.5" transform="translate(278.10,409.50) scale(0.754,0.820)" fill="none" stroke="#d6d6d6" stroke-width="1.402"/><text x="11.39 37.60 44.16 50.71 57.26 63.82 76.93 83.48 90.03 96.59 103.14 122.80 129.36 135.91 142.47 149.02 168.68 208.01 214.56 221.11 227.67 234.22 247.33 253.89 260.44 266.99 273.55 293.21 299.76 306.32 312.87 319.43 391.52 398.07 404.63 411.18 417.74 424.29 437.40 443.95 450.51 457.06 463.61" y="0" transform="translate(0,417.70) scale(0.74,1)" text-anchor="middle" font-family="Liberation Sans" font-size="10.5" font-weight="normal" fill="#d6d6d6">[22/066,3821.00][22/063,8771.00]:05:302,505</text><g shape-rendering="crispEdges"><rect x="1020" y="19" width="4" height="521" fill="#d0d0d0"/><rect x="1022" y="19" width="1" height="521" fill="#bcbcbc"/><rect x="1" y="19" width="4" height="521" fill="#cacaca"/><rect x="0" y="0" width="2" height="540" fill="#a0a0a0"/><rect x="0" y="540" width="1024" height="3" fill="#c8c8c8"/><rect x="0" y="543" width="1024" height="2" fill="#ececec"/></g><text x="1102.43 1108.46" y="0" transform="translate(0,184.00) scale(0.68,1)" text-anchor="middle" font-family="Liberation Sans" font-size="10.5" font-weight="normal" fill="#c4c4c4">03</text><text x="1102.43 1108.46" y="0" transform="translate(0,386.00) scale(0.68,1)" text-anchor="middle" font-family="Liberation Sans" font-size="10.5" font-weight="normal" fill="#c4c4c4">03</text><text x="1102.43 1108.46" y="0" transform="translate(0,523.00) scale(0.68,1)" text-anchor="middle" font-family="Liberation Sans" font-size="10.5" font-weight="normal" fill="#c4c4c4">03</text><clipPath id="c1"><rect x="5" y="38" width="968" height="150"/></clipPath><g clip-path="url(#c1)"><path d="M10.8,154.0H13.3M12.8,162.3H15.3M13.8,162.0H16.3M15.0,161.0V162.6M14.8,161.8H17.3M15.8,162.3H18.3M17.8,165.0H20.3M20.8,166.6H23.3M22.8,166.7H25.3M23.8,166.2H26.3M25.0,164.4V167.3M30.8,175.0H33.3M31.8,176.1H34.3M33.8,178.2H36.3M38.8,167.1H41.3M40.0,166.0V167.7M39.8,167.0H42.3M42.8,172.0H45.3M43.8,172.5H46.3M45.0,170.9V173.4M45.8,171.7H48.3M47.0,170.7V172.3M46.8,171.0H49.3M48.0,169.1V172.1M47.8,170.0H50.3M49.0,168.7V170.9M48.8,170.7H51.3M50.0,169.9V171.2M50.8,172.0H53.3M51.8,172.8H54.3M52.8,174.5H55.3M54.0,173.3V175.1M53.8,174.6H56.3M54.8,174.0H57.3M56.0,171.9V175.2M56.8,170.0H59.3M57.8,169.4H60.3M58.8,168.7H61.3M61.8,157.4H64.3M63.8,161.2H66.3M64.8,162.0H67.3M65.8,161.8H68.3M66.8,162.3H69.3M68.0,161.4V162.8M67.8,162.0H70.3M68.8,162.0H71.3M70.0,160.5V162.9M69.8,162.4H72.3M71.8,164.0H74.3M72.8,163.5H75.3M74.0,162.2V164.3M73.8,162.5H76.3M74.8,163.0H77.3M75.8,164.1H78.3M76.8,163.1H79.3M79.8,162.0H82.3M80.8,161.0H83.3M83.8,159.0H86.3M85.0,157.1V160.1M84.8,159.4H87.3M85.8,160.0H88.3M87.0,159.2V160.5M86.8,161.1H89.3M87.8,161.2H90.3M89.8,158.5H92.3M91.8,156.6H94.3M93.0,155.0V157.6M93.8,155.0H96.3M99.8,168.0H102.3M101.0,166.2V169.0M101.8,169.4H104.3M102.8,168.9H105.3M103.8,168.0H106.3M105.0,166.1V169.1M105.8,169.2H108.3M107.8,166.0H110.3M109.0,164.2V167.1M110.8,166.6H113.3M111.8,166.0H114.3M112.8,166.1H115.3M114.0,164.8V166.9M113.8,165.7H116.3M114.8,166.1H117.3M115.8,165.0H118.3M117.0,163.4V166.0M116.8,165.3H119.3M117.8,165.1H120.3M118.8,165.6H121.3M119.8,166.0H122.3M120.8,166.5H123.3M121.8,164.7H124.3M123.8,161.0H126.3M125.0,159.5V161.9M125.7,160.2H128.2M126.6,159.9H129.2M127.8,157.8V161.2M128.6,161.5H131.1M129.8,160.6V162.0M129.5,160.8H132.0M132.7,157.0H135.2M133.7,156.2H136.2M134.9,154.8V157.0M134.8,156.8H137.3M137.1,150.0H139.6M138.3,148.1V151.1M139.4,143.5H141.9M140.3,142.8H142.8M141.5,141.4V143.6M141.6,142.5H144.1M144.9,147.5H147.4M146.0,148.0H148.5M147.1,147.3H149.6M148.1,149.4H150.6M150.9,147.2H153.4M153.1,145.3H155.6M154.2,144.0V146.1M154.3,143.0H156.8M155.5,141.4V143.9M161.5,150.3H164.0M162.3,150.2H164.8M164.4,157.0H166.9M165.6,155.1V158.1M166.3,153.0H168.8M167.5,152.0V153.6M167.2,152.0H169.8M168.4,151.2V152.5M170.3,147.3H172.8M171.5,146.4V147.9M176.5,138.9H179.0M177.7,138.0V139.4M177.5,139.3H180.0M178.7,137.2V140.6M180.3,138.5H182.8M181.5,137.3V139.2M181.2,140.9H183.8M182.2,140.5H184.7M183.4,138.7V141.6M186.9,132.8H189.4M187.9,133.3H190.4M189.1,132.2V134.0M189.8,134.8H192.3M191.0,133.5V135.6M190.7,134.1H193.2M191.5,136.0H194.0M192.7,134.3V137.0M192.4,136.0H194.9M193.6,135.1V136.5M201.2,139.9H203.8M202.4,138.6V140.6M203.4,142.4H205.9M204.6,141.2V143.2M205.5,146.5H208.0M206.7,144.4V147.8M206.5,146.1H209.0M207.6,146.8H210.1M210.1,143.0H212.6M212.7,139.2H215.2M213.9,137.4V140.3M214.6,137.3H217.1M215.8,135.9V138.1M215.7,139.3H218.2M216.7,138.7H219.2M219.8,139.5H222.3M221.0,138.3V140.2M224.5,147.0H227.0M225.7,146.1V147.5M225.4,147.5H227.9M226.4,148.5H228.9M227.5,148.7H230.0M228.7,147.9V149.2M228.5,148.7H231.0M231.7,144.9H234.2M232.9,144.1V145.4M234.2,143.0H236.7M238.7,148.0H241.2M240.0,148.5H242.5M241.2,148.0H243.7M242.9,145.4H245.4M243.8,144.3H246.3M245.7,142.4H248.2M246.7,142.9H249.2M247.9,141.7V143.6M249.8,143.8H252.2M250.7,144.6H253.2M252.6,144.6H255.1M254.5,145.5H257.0M255.6,145.3H258.1M256.8,145.2H259.2M257.9,143.3V146.3M260.0,141.6H262.5M261.2,140.6V142.2M261.1,141.1H263.6M262.3,139.0V142.4M266.6,144.5H269.1M267.8,141.7H270.3M268.8,141.4H271.3M270.0,140.5V141.9M270.7,140.9H273.2M272.9,137.7H275.4M274.2,138.6H276.7M275.4,137.1V139.5M275.1,137.9H277.6M276.1,139.0H278.6M277.1,139.4H279.6M278.0,138.2H280.5M279.2,136.7V139.1M279.1,136.7H281.6M280.2,137.3H282.7M284.5,139.5H287.0M286.6,141.2H289.1M288.5,141.7H291.0M289.7,140.5V142.4M289.4,143.0H291.9M290.3,143.3H292.8M292.0,141.1H294.5M293.2,140.5H295.8M296.4,145.2H298.9M298.3,147.5H300.8M300.8,150.0H303.3M302.8,150.0H305.2M303.7,151.3H306.2M305.7,149.9H308.2M306.9,147.8V151.2M308.7,148.0H311.2M309.9,145.9V149.2M310.7,146.4H313.2M311.7,144.8H314.2M312.6,147.2H315.1M313.5,148.0H316.0M314.5,148.5H317.0M315.4,147.5H317.9M316.6,146.0V148.4M316.4,148.4H318.9M317.4,148.0H319.9M318.4,148.9H320.9M319.6,147.7V149.5M319.5,148.3H322.0M320.5,148.0H323.0M321.7,147.0V148.6M321.6,148.8H324.1M322.8,147.1V149.9M323.7,150.0H326.2M324.6,149.0H327.1M326.6,150.9H329.1M327.5,150.6H330.0M328.7,148.5V151.8M328.6,148.2H331.1M331.8,148.4H334.3M334.0,147.6H336.5M335.1,147.8H337.6M336.1,147.9H338.6M339.9,150.1H342.4M341.8,153.8H344.2M342.7,153.8H345.2M343.9,152.9V154.4M344.7,151.1H347.2M345.6,152.1H348.1M346.6,149.4H349.1M347.6,150.2H350.1M349.5,147.4H352.0M350.4,146.8H352.9M351.4,147.6H353.9M352.6,145.7V148.7M353.2,149.8H355.8M354.2,149.4H356.7M355.4,149.3H357.9M356.6,147.7V150.2M358.6,147.9H361.1M359.6,146.9H362.1M360.8,144.7V148.2M362.2,142.1H364.7M363.4,141.2V142.7M363.1,142.4H365.6M364.1,142.9H366.6M366.2,148.0H368.7M367.4,147.2V148.5M369.4,144.3H371.9M370.5,143.8H373.0M371.7,142.5V144.7M372.6,139.8H375.1M373.8,138.7V140.4M373.7,140.0H376.2M374.9,138.2V141.2M375.8,139.2H378.3M377.0,138.0H379.5M378.2,138.4H380.7M382.1,145.3H384.6M383.3,143.6V146.3M383.1,145.5H385.6M385.9,149.6H388.4M387.1,148.7V150.1M387.8,148.0H390.3M388.8,147.1H391.3M390.0,146.2V147.7M389.7,147.5H392.2M399.9,158.0H402.4M405.3,153.8H407.8M406.5,151.8V155.0M406.2,152.8H408.7M407.2,152.4H409.7M408.1,151.6H410.6M410.0,150.1H412.5M411.2,149.2V150.6M411.0,151.5H413.5M412.2,149.4V152.7M412.0,150.9H414.5M413.2,148.8V152.1M412.9,150.3H415.4M413.8,151.2H416.3M415.6,150.2H418.1M416.8,149.1V150.9M416.7,149.4H419.2M417.8,148.7H420.3M423.3,135.9H425.8M424.5,134.4V136.9M425.4,139.4H427.9M426.4,138.1H428.9M427.4,137.0H429.9M433.2,129.1H435.8M436.2,126.7H438.7M437.4,124.7V127.9M439.1,129.6H441.6M440.3,127.8V130.7M443.8,122.6H446.3M444.7,122.5H447.2M445.7,121.5H448.2M446.7,120.7H449.2M447.6,121.2H450.1M448.8,119.1V122.5M449.6,119.0H452.1M450.6,119.3H453.1M451.6,118.6H454.1M452.5,118.7H455.0M453.4,119.2H455.9M454.3,119.7H456.8M455.5,117.8V120.9M455.2,121.5H457.7M456.1,122.3H458.6M457.1,122.0H459.6M458.2,121.0V122.6M458.9,125.2H461.4M460.0,125.0H462.5M462.2,129.5H464.7M463.3,128.9H465.8M464.4,129.7H466.9M465.5,128.8H468.0M466.6,129.9H469.1M467.7,130.4H470.2M468.9,129.6V130.9M469.6,132.9H472.1M470.8,131.1V134.0M470.6,134.0H473.1M471.8,131.8V135.3M471.6,134.0H474.1M472.6,133.6H475.1M473.6,132.6H476.1M474.8,131.2V133.4M476.7,124.9H479.2M479.4,125.2H481.9M480.6,123.9V126.0M480.3,124.2H482.8M482.2,126.1H484.7M483.1,126.0H485.6M484.3,124.0V127.2M487.8,118.7H490.3M489.0,117.0V119.8M488.7,119.2H491.2M489.7,119.3H492.2M490.7,119.8H493.2M492.7,116.4H495.2M493.7,117.1H496.2M496.6,121.4H499.1M497.5,121.2H500.0M498.5,120.8H501.0M499.5,121.2H502.0M501.5,122.3H504.0M502.7,120.2V123.6M502.5,122.4H505.0M504.3,122.3H506.8M505.3,123.0H507.8M506.5,121.6V123.9M507.1,121.5H509.6M508.0,120.8H510.5M509.2,119.7V121.5M508.9,121.0H511.4M510.1,119.4V121.9M509.9,121.2H512.4M511.7,119.7H514.2M512.8,118.6H515.3M514.0,116.7V119.7M513.9,117.4H516.4M515.1,117.5H517.6M517.1,118.5H519.6M518.1,116.9H520.6M519.0,118.8H521.5M521.8,108.3H524.2M523.0,106.7V109.4M522.7,107.7H525.2M523.9,106.7V108.3M523.6,107.9H526.1M526.3,113.2H528.8M527.5,111.8V114.1M528.1,114.8H530.6M529.4,113.9V115.4M529.1,113.8H531.6M530.0,113.2H532.5M531.9,108.5H534.4M533.1,106.6V109.7M534.6,103.0H537.1M535.8,101.9V103.7M535.5,98.6H538.0M536.7,96.8V99.7M540.1,91.2H542.6M541.0,92.0H543.5M543.8,89.4H546.3M544.7,90.4H547.2M545.9,89.3V91.0M546.6,91.3H549.1M547.5,92.1H550.0M549.3,90.7H551.8M550.5,89.2V91.6M560.3,92.4H562.8M561.2,96.7H563.7M562.1,101.0H564.6M564.9,103.6H567.4M566.1,102.1V104.4M566.7,101.1H569.2M567.6,99.5H570.1M568.6,99.6H571.1M569.5,98.6H572.0M570.7,97.7V99.2M570.4,100.4H572.9M571.6,98.4V101.6M571.3,100.2H573.8M572.3,101.3H574.8M573.2,103.2H575.7M574.1,103.6H576.6M575.0,105.6H577.5M577.8,107.0H580.2M578.7,105.5H581.2M582.4,104.7H584.9M583.3,104.0H585.8M584.2,103.5H586.7M585.4,102.5V104.2M585.1,103.2H587.6M586.9,104.0H589.4M588.8,100.0H591.3M591.5,90.7H594.0M592.4,87.5H594.9M593.3,86.8H595.8M598.0,89.4H600.5M602.6,105.4H605.1M603.5,105.9H606.0M604.7,104.0V107.0M611.7,105.6H614.2M612.9,103.8V106.6M614.5,111.6H617.0M615.7,110.5V112.3M616.5,114.9H619.0M622.8,136.9H625.3M630.5,45.7H633.0M631.7,43.5V47.0M635.6,89.4H638.1M636.8,87.8V90.4M636.5,87.2H639.0M637.7,85.9V88.0M637.3,86.5H639.8M638.5,85.3V87.2M638.2,86.8H640.7M639.4,84.7V88.1M645.2,68.2H647.8M646.2,67.2H648.7M649.8,79.1H652.3M651.0,77.9V79.8M655.2,65.1H657.7M657.3,61.3H659.8M659.5,57.3H662.0M660.5,58.9H663.0M661.7,57.2V59.9M661.6,59.8H664.1M670.0,85.0H672.5M671.9,90.0H674.4M672.9,92.0H675.4M675.5,79.1H678.0M681.5,105.7H684.0M685.1,110.0H687.6M687.0,104.8H689.5M688.2,102.7V106.0M695.4,125.1H697.9M696.6,123.6V126.1M697.3,121.5H699.8M699.2,123.9H701.8M700.5,122.7V124.5M700.2,123.9H702.7M701.4,122.4V124.9M702.1,125.7H704.6M703.1,128.9H705.6M704.0,128.8H706.5M705.2,126.9V129.9M714.6,137.6H717.1M715.6,137.0H718.1M717.6,136.1H720.1M718.6,134.7H721.1M719.7,135.7H722.2M721.7,134.4H724.2M722.9,133.0V135.2M722.7,134.1H725.2M723.7,132.0H726.2M724.9,130.4V132.9M724.8,131.2H727.3M725.8,133.1H728.3M727.0,131.3V134.2M726.8,131.8H729.3M727.8,132.5H730.3M728.9,131.3H731.4M729.9,132.4H732.4M731.1,130.3V133.6M731.0,131.7H733.5M732.0,133.1H734.5M733.2,131.4V134.1M733.0,133.3H735.5M734.2,132.2V134.0M734.0,133.8H736.5M735.1,134.6H737.6M736.1,134.8H738.6M737.1,135.6H739.6M738.2,136.1H740.7M739.4,133.9V137.4M740.3,136.8H742.8M741.5,135.4V137.6M741.4,138.5H743.9M742.6,137.3V139.2M751.0,137.3H753.5M752.2,136.1V138.0M756.4,136.2H758.9M757.6,135.3V136.7M757.2,134.1H759.7M758.4,133.0V134.7M758.1,134.0H760.6M759.3,133.4H761.8M760.6,130.8H763.1M761.8,130.0V131.3M767.3,132.5H769.8M768.5,131.5V133.0M768.1,132.7H770.6M777.0,136.6H779.5M778.2,135.1V137.4M778.0,135.7H780.5M779.2,134.5V136.4M778.9,135.6H781.4M779.9,135.3H782.4M780.9,137.3H783.4M781.8,136.5H784.3M783.0,135.0V137.5M782.8,137.6H785.3M784.0,136.8V138.1M783.8,137.3H786.3M784.8,136.7H787.2M786.0,135.0V137.8M786.6,139.1H789.1M787.8,138.3V139.7M787.6,137.9H790.1M789.3,139.9H791.8M791.1,140.5H793.6M792.1,141.8H794.6M794.0,143.7H796.5M795.0,144.0H797.5M796.2,142.3V145.1M797.9,146.2H800.4M798.8,143.1H801.3M800.0,141.8V143.9M800.5,145.0H803.0M802.4,147.5H804.9M803.3,147.4H805.8M804.5,146.4V148.0M806.9,143.7H809.4M808.1,141.6V145.0M807.8,142.8H810.3M809.0,141.1V143.8M809.5,146.2H812.0M810.7,145.3V146.7M810.5,146.0H813.0M811.4,144.9H813.9M812.3,144.6H814.8M813.5,143.3V145.5M813.3,143.7H815.8M817.1,148.5H819.6M819.4,151.8H821.9M820.3,152.2H822.8M821.3,152.8H823.8M822.3,152.0H824.8M823.2,152.5H825.8M824.2,153.5H826.7M825.4,151.7V154.5M825.1,154.2H827.6M826.3,152.0V155.5M826.1,154.0H828.6M827.8,152.7H830.3M829.0,150.9V153.8M828.7,152.7H831.2M829.6,151.5H832.1M830.8,149.6V152.6M830.4,151.8H832.9M831.3,151.4H833.8M832.5,149.6V152.5M832.2,151.9H834.7M833.0,153.1H835.5M833.9,152.7H836.4M837.3,145.5H839.8M839.0,142.4H841.5M840.0,142.3H842.5M841.8,140.4H844.3M843.0,139.0V141.2M842.8,141.1H845.3M844.5,142.6H847.0M845.7,141.4V143.4M845.4,142.4H847.9M846.6,140.3V143.7M846.3,143.2H848.8M847.5,141.7V144.0M850.8,144.5H853.3M852.0,143.6V145.0M851.8,143.7H854.3M856.5,152.0H859.0M858.8,149.9H861.3M860.0,147.9V151.0M860.1,148.5H862.6M861.3,147.0V149.4M861.0,148.2H863.5M861.8,147.9H864.3M866.2,136.4H868.7M867.4,135.2V137.0M870.6,134.0H873.1M871.4,135.8H873.9M872.6,134.7V136.5M872.3,135.0H874.8M873.5,133.3V136.0M873.2,134.2H875.7M876.0,127.4H878.5M877.2,125.6V128.5M877.0,126.3H879.5M878.2,124.5V127.5M878.1,127.3H880.6M879.2,127.9H881.7M881.3,125.3H883.8M882.2,124.5H884.7M883.4,123.6V125.0M884.8,122.0H887.3M885.8,124.0H888.3M887.0,123.1V124.5M886.7,122.4H889.2M887.5,122.1H890.0M888.4,121.5H890.9M890.5,118.8H893.0M891.7,117.2V119.7M891.6,119.6H894.1M895.0,115.1H897.5M895.8,112.7H898.3M896.7,113.1H899.2M897.9,112.2V113.6M897.6,113.2H900.1M902.0,106.3H904.5M903.1,107.3H905.6M905.2,109.6H907.7M906.3,110.6H908.8M907.4,111.7H909.9M909.6,114.4H912.1M911.9,116.9H914.4M914.0,117.6H916.5M915.2,115.6V118.8M915.1,115.4H917.6M916.2,118.3H918.7M917.3,118.3H919.8M920.5,110.6H923.0M922.4,104.1H924.9M923.6,103.2V104.6M924.1,107.7H926.6M925.3,105.8V108.8M929.7,111.7H932.2M930.8,111.2H933.3M935.9,118.9H938.4M938.7,123.5H941.2M939.5,127.8H942.0M940.7,126.6V128.5M940.4,127.3H942.9M941.3,128.2H943.8M942.1,128.6H944.6M943.3,126.4V129.9M945.5,134.3H948.0M946.7,133.2V135.0M946.5,137.4H949.0M947.7,136.6V137.9M947.5,138.2H950.0M948.7,136.9V139.0M953.5,133.3H956.0M955.2,134.3H957.7M956.4,134.8H958.9M957.7,135.6H960.2M958.6,135.5H961.1M959.4,133.6H961.9M960.6,132.6V134.1M960.3,134.3H962.8M961.5,133.1V135.0M962.0,135.3H964.5M962.9,133.7H965.4M966.4,131.3H968.9M967.4,127.3H969.9" stroke="#e0d478" stroke-width="1.2" fill="none"/><path d="M11.0,153.8V157.3M13.0,153.1V162.4M18.0,161.8V165.6M29.0,169.6V172.5M30.0,171.4V174.5M31.0,173.6V176.0M43.0,168.5V171.2M51.0,170.3V173.1M64.0,157.4V160.3M79.0,162.7V165.2M92.0,156.7V159.0M96.0,154.8V158.3M97.0,157.1V159.5M100.0,164.2V167.7M102.0,167.4V170.3M106.0,167.2V170.0M111.0,164.0V166.8M128.8,159.2V161.8M139.6,144.1V150.4M144.0,142.2V146.3M145.1,144.9V148.5M158.4,137.6V142.5M160.6,144.8V147.2M161.8,146.3V149.9M164.4,149.6V152.2M166.6,155.2V157.2M172.6,144.9V147.7M175.8,139.8V143.3M186.0,134.7V137.5M190.1,132.4V135.6M198.6,132.0V134.5M199.5,133.4V137.0M201.2,137.5V139.7M205.6,142.0V145.6M224.0,143.2V146.5M237.4,144.6V150.4M238.7,147.1V150.5M245.9,140.5V144.5M249.0,142.7V146.0M250.0,144.1V145.9M259.1,140.5V145.7M260.2,139.4V142.5M263.3,140.9V144.0M264.4,143.3V145.7M266.5,143.4V145.5M282.5,136.7V140.3M283.6,136.9V140.7M284.7,136.9V138.8M286.8,138.8V141.5M288.7,141.1V143.3M295.7,140.3V144.1M298.6,144.6V147.4M300.8,147.4V149.9M307.8,149.8V152.1M323.8,148.7V151.0M338.2,147.6V151.0M340.1,149.2V151.2M342.0,150.0V152.7M353.5,147.1V149.5M357.9,149.2V151.5M381.3,139.4V142.6M385.3,145.3V149.3M391.9,147.1V149.3M394.1,151.8V159.5M395.2,158.5V161.0M397.3,161.1V162.8M400.2,155.8V158.1M402.1,157.5V160.8M419.8,145.8V149.0M421.2,138.4V143.2M425.6,135.7V140.4M429.6,136.6V138.5M430.5,137.7V141.8M436.3,119.2V123.9M442.5,130.5V132.7M469.9,130.2V132.8M478.8,124.2V127.3M482.5,123.7V126.9M485.8,127.5V131.6M495.8,116.9V119.9M496.8,118.6V121.2M501.7,120.5V123.3M504.6,119.9V123.2M521.1,114.6V119.4M525.7,107.4V111.9M528.4,113.0V115.8M534.9,102.5V106.5M539.5,85.1V88.1M540.4,87.3V91.7M543.1,89.5V92.5M546.9,89.9V92.2M553.2,85.8V88.0M555.1,87.4V89.8M556.0,86.3V90.4M556.9,83.1V87.0M558.8,80.5V87.0M559.7,85.6V91.4M564.3,100.1V106.0M577.1,105.5V107.8M578.0,106.0V108.8M582.6,100.7V105.3M598.3,84.1V90.2M600.1,89.2V92.8M601.0,92.0V96.9M606.5,107.3V111.4M608.3,113.8V117.5M612.0,103.9V105.8M614.7,107.1V113.2M616.6,111.3V116.0M618.9,114.7V118.5M622.3,135.2V137.7M623.1,136.2V138.3M624.9,136.6V144.2M625.7,142.6V151.9M626.6,150.7V157.0M633.0,45.0V71.5M634.3,70.5V113.5M640.3,86.8V91.0M641.1,89.8V93.3M642.0,92.9V97.5M649.3,64.3V70.5M652.2,74.4V79.7M655.5,63.6V67.3M663.8,59.1V64.6M664.8,62.7V66.3M665.8,65.4V68.2M667.7,68.0V71.0M670.2,76.8V84.9M672.2,84.5V87.8M678.0,78.3V84.8M679.2,83.9V87.5M680.1,86.5V92.8M680.9,91.7V97.7M681.8,96.7V105.3M683.5,105.5V109.5M689.1,104.0V111.2M689.9,110.5V113.7M690.8,113.5V120.8M692.1,119.6V155.0M702.4,123.0V126.3M706.2,128.6V131.2M707.1,130.3V133.5M707.9,132.3V138.2M708.8,137.4V141.1M709.7,140.5V150.6M710.5,149.3V159.0M711.4,157.9V168.5M712.6,153.4V168.5M714.9,137.7V141.0M745.1,134.0V137.3M746.0,133.9V138.8M747.7,142.2V145.8M753.2,136.6V141.0M754.1,139.7V144.1M764.0,121.0V123.8M765.0,122.9V125.7M766.7,128.1V132.1M767.6,130.1V134.8M773.0,124.3V129.6M774.0,129.5V134.4M775.1,133.2V136.4M777.3,133.9V136.7M786.9,136.7V138.7M789.7,137.5V140.8M794.2,141.5V144.4M797.2,144.0V146.8M800.8,142.4V145.5M802.7,144.1V147.4M805.5,147.3V151.5M809.8,142.4V147.8M816.2,143.1V145.9M819.6,147.9V153.4M842.1,140.2V142.9M844.9,140.5V143.7M848.3,143.0V144.7M853.9,143.4V148.7M855.6,150.1V154.9M868.4,136.2V138.3M869.6,135.4V137.6M876.1,127.7V131.8M905.4,106.4V110.4M909.7,110.8V113.9M912.0,113.9V116.4M914.1,116.7V118.1M919.5,116.3V118.8M922.7,109.1V111.2M924.5,103.6V107.8M927.5,108.9V110.8M928.7,109.8V114.7M933.2,110.7V113.1M935.4,114.9V117.2M936.2,116.9V119.8M939.0,120.7V123.8M944.2,127.9V130.7M950.0,138.1V140.1M951.2,139.3V142.3M955.5,132.5V135.1M962.4,133.7V136.1" stroke="#1e78e8" stroke-width="1.6" fill="none"/><path d="M7.0,165.4V168.0M8.0,162.8V165.9M9.0,159.4V163.9M10.0,156.7V160.8M20.0,164.1V168.3M21.0,165.5V168.2M23.0,165.8V168.4M26.0,164.0V166.7M27.0,164.4V167.2M28.0,166.3V170.3M34.0,175.5V178.6M36.0,175.3V178.2M37.0,173.5V176.5M38.0,169.4V174.1M39.0,168.0V170.6M42.0,166.7V169.0M46.0,170.7V172.8M57.0,171.6V174.6M61.0,166.7V169.5M62.0,157.6V167.2M72.0,162.0V164.2M80.0,161.4V165.9M83.0,158.0V161.8M84.0,156.4V159.0M90.0,160.4V163.5M94.0,154.7V157.0M98.0,158.8V160.7M99.0,159.7V164.6M108.0,165.7V169.4M110.0,164.0V166.2M124.0,160.7V165.3M126.0,159.1V161.2M131.8,159.2V161.7M137.0,154.3V157.1M150.4,147.0V149.8M153.0,144.5V148.1M156.4,141.0V143.1M157.4,137.1V142.4M159.3,141.7V145.6M169.4,148.7V152.0M173.7,143.6V146.4M174.7,141.6V144.7M179.6,136.4V140.3M184.3,138.7V141.4M185.1,136.1V139.8M187.2,131.7V135.6M194.6,134.0V136.2M195.5,131.6V134.4M196.7,128.9V132.7M197.6,129.7V133.0M200.3,135.4V138.6M203.7,139.3V142.4M210.1,142.2V147.7M212.2,140.9V143.2M213.0,139.0V142.5M214.9,137.8V139.3M219.0,138.4V141.0M220.0,137.7V140.8M222.0,139.3V142.2M223.0,141.5V144.8M230.8,146.4V149.5M231.8,144.6V146.8M234.2,141.8V145.7M236.4,142.8V145.7M243.3,146.3V148.7M254.8,144.4V148.5M265.4,143.1V146.1M270.9,139.9V141.4M272.9,139.1V141.5M292.3,140.9V143.4M305.9,149.6V151.4M308.9,147.4V152.4M311.0,144.9V148.3M330.8,147.5V150.5M331.9,148.6V150.7M334.1,145.7V148.6M339.2,149.0V151.7M344.9,150.7V154.1M349.7,146.8V151.1M358.8,148.6V152.0M361.7,144.8V147.0M362.6,142.3V145.6M366.4,142.7V148.1M368.5,146.6V148.8M369.5,144.1V147.2M372.7,141.7V143.9M375.9,138.0V140.1M380.4,138.0V140.7M382.3,141.2V144.3M388.1,148.1V150.3M396.3,160.5V163.2M398.2,157.1V161.3M399.2,155.6V158.2M403.2,154.2V161.3M404.3,150.8V155.6M405.4,151.0V154.1M410.2,150.2V152.5M415.9,148.8V151.3M420.5,142.6V147.7M422.0,136.4V139.6M423.4,132.6V137.9M431.5,140.3V143.7M432.6,140.8V143.7M433.7,137.6V142.0M435.2,118.5V130.1M439.3,126.9V130.9M441.4,129.4V131.6M443.2,125.9V132.7M444.0,122.1V126.8M449.8,119.6V122.2M459.2,121.8V125.0M462.3,124.6V127.9M475.9,128.1V133.2M477.0,124.9V128.9M486.9,121.3V131.2M488.0,116.9V122.9M492.9,116.4V120.1M507.4,121.0V123.4M512.0,118.8V121.6M517.4,114.3V117.9M522.0,111.3V115.7M532.1,108.2V113.3M534.0,105.4V109.2M537.7,92.1V99.3M538.6,85.5V93.5M544.1,88.4V90.7M549.6,90.2V93.1M551.4,88.3V90.8M552.3,85.9V88.8M557.8,80.2V84.3M565.2,103.8V106.0M567.0,99.5V103.9M580.8,103.7V106.3M581.7,100.8V104.7M587.2,102.7V105.6M589.0,99.9V104.1M590.9,95.7V100.1M591.8,93.5V97.5M595.5,85.4V87.0M596.4,82.7V86.1M597.3,82.9V85.3M601.9,95.5V99.1M602.8,98.2V100.2M605.6,105.6V108.0M607.4,110.8V114.6M609.2,113.2V117.4M610.2,107.5V113.5M611.1,103.6V108.0M613.8,104.7V108.6M620.1,117.1V128.5M621.4,127.1V136.0M627.9,129.0V156.4M629.1,102.1V130.0M630.0,83.5V102.7M630.8,63.9V84.0M635.5,101.5V112.8M643.2,84.5V97.7M644.5,70.5V86.3M645.5,68.9V71.9M648.4,64.8V67.9M650.1,69.0V74.1M653.5,68.4V75.5M654.5,65.9V69.3M657.4,60.9V66.0M659.6,57.3V62.1M669.0,69.8V78.6M675.0,88.7V92.8M675.8,84.1V89.7M684.4,109.0V112.6M685.4,110.7V113.4M687.2,106.5V110.4M693.0,144.5V155.7M693.8,136.7V145.5M694.7,127.2V138.0M695.7,123.8V128.1M697.5,120.9V125.6M713.9,140.3V153.9M717.8,134.8V137.4M721.9,133.6V135.9M743.9,136.1V139.2M746.8,138.7V143.7M749.4,141.7V144.8M750.3,140.7V142.4M751.2,136.2V142.0M755.0,141.4V144.3M755.8,138.9V142.8M756.7,137.0V139.6M763.1,120.4V131.5M765.9,125.5V129.1M770.2,130.1V133.1M771.2,126.1V131.0M772.1,124.0V127.4M791.4,139.4V141.6M806.4,149.0V151.1M807.2,146.7V149.5M817.1,144.0V146.7M828.2,151.7V154.4M836.4,147.9V153.6M837.6,145.4V148.8M839.3,142.5V146.1M849.2,144.5V146.4M850.2,143.8V147.1M851.1,143.9V146.1M854.7,147.2V151.4M856.7,151.0V154.8M858.8,149.6V152.5M863.9,146.4V147.9M865.1,140.9V146.8M866.4,135.2V142.0M870.9,134.3V135.8M875.2,131.0V134.6M884.2,122.6V125.4M885.1,120.6V123.2M890.7,119.4V122.0M894.0,117.0V120.2M895.3,115.1V118.3M899.8,109.0V113.5M901.1,106.5V109.5M902.2,106.7V109.1M920.4,115.6V117.9M926.2,106.9V109.3M929.8,110.3V113.8M934.5,112.7V116.0M938.0,118.0V122.3M952.1,138.6V142.2M952.9,136.3V139.7M953.8,132.9V137.2M965.4,131.7V134.6M966.6,130.4V133.0" stroke="#ff1010" stroke-width="1.6" fill="none"/></g><clipPath id="c2"><rect x="5" y="206" width="968" height="184"/></clipPath><g clip-path="url(#c2)"><path d="M114.4,301.3H116.9M115.6,299.2V302.6M117.8,296.9H120.3M118.8,297.4H121.3M127.5,296.9H130.0M128.7,295.5V297.8M128.4,297.5H130.9M131.3,288.5H133.8M132.5,286.6V289.7M149.6,270.0H152.1M150.8,268.7V270.9M150.6,266.6H153.1M151.6,265.2H154.1M152.5,264.2H155.0M156.4,258.0H158.9M158.3,259.9H160.8M159.2,260.9H161.7M160.4,259.2V261.9M160.2,261.7H162.7M161.4,260.4V262.4M161.2,260.9H163.7M162.1,263.1H164.6M164.1,262.6H166.6M165.3,261.2V263.5M165.1,264.9H167.6M166.0,266.1H168.5M167.0,266.6H169.5M168.2,264.5V267.9M170.8,255.1H173.3M177.6,237.5H180.1M178.8,235.6V238.6M178.5,237.3H181.0M179.7,235.8V238.2M179.5,236.4H182.0M180.7,234.8V237.4M185.3,252.9H187.8M186.5,251.5V253.7M188.2,246.2H190.7M189.3,244.5V247.3M190.1,248.4H192.6M191.2,246.5V249.5M191.0,248.3H193.5M194.9,225.7H197.4M196.1,223.8V226.8M207.4,239.6H209.9M209.3,238.7H211.8M210.5,237.5V239.4M211.2,240.1H213.8M212.4,238.0V241.4M217.0,244.5H219.5M218.2,243.1V245.4M218.0,247.4H220.5M219.9,251.4H222.4M221.1,250.5V251.9M221.9,254.3H224.4M225.7,258.0H228.2M226.9,256.6V258.8M226.7,256.5H229.2M227.8,254.4V257.8M229.5,251.2H232.0M232.5,228.8H235.0M233.7,226.9V229.9M234.4,230.0H236.9M235.6,228.9V230.7M237.3,226.2H239.8M238.5,224.4V227.3M239.2,220.0H241.7M241.1,216.9H243.6M244.0,215.6H246.5M247.9,223.3H250.4M249.0,226.8H251.5M250.2,225.8V227.4M250.1,227.4H252.6M253.3,235.7H255.8M254.5,234.2V236.6M257.4,231.9H259.9M259.5,233.0H262.0M260.6,234.0H263.1M261.8,231.8V235.3M262.8,236.5H265.3M264.0,234.9V237.5M266.1,241.4H268.6M269.4,244.7H271.9M278.5,233.2H281.0M279.5,231.7H282.0M281.6,231.9H284.1M282.6,231.5H285.1M286.1,240.5H288.6M288.2,239.9H290.7M291.4,239.1H293.9M292.6,237.4V240.1M292.5,238.1H295.0M295.8,243.9H298.3M300.4,259.8H302.9M307.7,264.2H310.2M308.8,263.1H311.3M310.0,262.2V263.6M309.9,264.6H312.4M311.0,265.2H313.5M312.2,263.8V266.0M317.0,287.5H319.5M330.0,290.2H332.5M331.1,289.6H333.6M332.3,287.7V290.7M332.2,290.2H334.7M341.6,278.8H344.1M342.8,277.3V279.7M342.6,278.6H345.1M343.6,280.0H346.1M344.6,280.2H347.1M348.1,273.7H350.6M349.1,272.8H351.6M350.1,272.1H352.6M351.3,270.7V272.9M351.2,271.2H353.7M352.4,270.4V271.7M353.4,271.8H355.9M366.1,268.3H368.6M366.9,264.6H369.4M370.2,254.6H372.7M375.4,264.6H377.9M376.6,262.5V265.9M377.9,274.6H380.4M387.4,278.5H389.9M388.6,279.5H391.1M391.1,282.8H393.6M392.3,281.0V283.9M394.4,249.8H396.9M396.1,259.7H398.6M397.2,259.0H399.7M398.4,257.2V260.2M405.6,268.4H408.1M406.8,267.0V269.3M407.6,269.6H410.1M408.8,267.8V270.7M408.7,267.0H411.2M412.2,273.2H414.7M418.3,257.3H420.8M421.7,246.5H424.2M425.4,263.4H427.9M427.7,268.2H430.2M428.8,267.3H431.3M429.9,267.6H432.4M431.1,266.4V268.3M431.0,266.5H433.5M434.0,249.8H436.5M435.2,247.8V251.0M439.8,256.4H442.3M440.7,256.2H443.2M441.9,255.3V256.8M456.3,269.6H458.8M458.0,274.6H460.5M471.2,307.6H473.7M472.4,305.5V308.9M481.6,295.3H484.1M482.8,293.6V296.3M482.8,296.0H485.3M484.0,294.3V297.0M490.2,279.5H492.7M492.7,277.0H495.2M494.7,274.2H497.2M496.6,271.9H499.1" stroke="#e0d478" stroke-width="1.2" fill="none"/><path d="M96.6,303.0V322.8M99.1,323.7V326.9M100.8,329.7V338.2M104.9,329.4V332.0M108.2,309.3V316.9M109.5,309.1V315.1M110.7,314.7V318.8M122.9,295.2V299.3M124.8,302.1V305.8M127.7,297.0V300.9M136.4,279.6V282.1M142.8,246.6V252.1M145.1,254.5V258.1M146.0,258.0V262.9M148.9,269.0V273.0M177.8,235.5V238.7M183.6,240.3V244.3M185.5,249.1V255.3M190.3,245.6V247.7M193.2,240.6V249.0M195.1,226.1V234.5M198.0,224.1V227.3M199.9,225.9V228.3M200.9,227.3V230.6M203.9,217.9V223.7M206.7,233.9V239.8M214.4,238.3V241.3M220.2,246.7V251.7M222.1,251.4V254.6M225.0,255.4V256.9M228.8,254.6V256.6M252.4,227.0V231.0M256.6,238.3V243.8M257.6,229.5V231.9M262.9,233.8V236.5M265.1,236.1V238.6M266.2,238.2V241.9M285.1,230.8V235.6M286.3,234.1V239.2M295.9,240.6V243.2M298.2,243.3V249.8M306.1,252.8V255.0M307.8,258.0V265.4M314.4,267.2V270.4M316.0,276.8V283.0M317.1,282.1V286.3M319.3,287.5V291.3M322.6,273.7V278.4M326.8,281.4V283.1M327.9,282.1V285.1M330.1,285.5V290.1M337.1,273.2V277.9M355.7,270.9V274.5M356.8,268.9V273.7M359.0,260.9V264.8M361.5,240.4V252.0M362.7,240.8V245.7M363.9,245.1V250.6M366.4,261.6V271.2M373.3,243.2V250.0M379.9,273.0V275.1M383.2,274.4V279.6M384.4,278.4V286.5M385.7,285.5V296.3M387.3,277.3V287.4M393.1,270.0V283.0M400.6,252.1V255.2M401.4,252.5V265.6M404.7,261.1V268.9M414.6,273.2V281.9M435.2,249.8V272.0M437.7,267.5V270.6M446.0,240.3V260.5M449.7,252.7V259.7M450.9,258.8V268.4M460.0,274.1V279.3M460.9,278.2V283.2M461.7,282.6V294.7M462.8,293.8V296.8M463.9,295.9V299.3M465.0,298.4V301.5M466.2,297.2V301.5M467.5,292.4V298.2M469.9,295.4V297.8M474.6,299.9V306.2M475.7,297.7V310.9M480.6,276.4V286.1M481.5,284.8V292.7" stroke="#1e78e8" stroke-width="1.6" fill="none"/><path d="M96.6,302.2V319.5M103.2,332.5V336.4M105.7,324.9V329.9M106.5,321.1V326.5M107.3,315.9V322.2M113.1,309.6V314.5M118.1,297.1V300.7M121.9,294.6V298.1M123.8,299.1V303.3M125.8,302.7V306.1M126.7,299.8V303.4M130.6,295.0V297.8M131.6,291.3V296.5M133.5,285.1V289.3M134.5,283.0V286.6M135.4,280.9V284.0M137.4,275.7V280.9M138.3,269.7V277.3M139.3,265.6V271.0M140.4,256.9V267.1M141.6,246.7V258.0M144.1,251.3V255.5M154.7,262.4V265.0M156.6,258.1V261.4M164.3,261.5V264.1M171.0,259.3V262.1M172.9,250.5V255.7M173.9,246.7V251.4M174.9,243.5V247.4M175.9,239.1V244.8M176.9,237.5V240.1M181.6,236.2V238.5M182.6,237.0V241.3M184.6,243.2V250.4M187.4,248.7V253.3M188.4,244.9V249.8M203.2,217.7V224.3M204.7,222.9V226.4M205.7,225.7V235.3M213.4,238.1V240.3M229.8,252.8V255.2M231.7,237.8V251.5M232.7,227.9V238.9M241.3,216.0V220.9M243.2,214.7V217.6M256.6,229.9V243.0M269.5,241.6V244.1M271.9,240.5V244.7M273.1,236.3V241.3M274.2,233.5V236.9M275.3,231.6V234.9M276.4,229.5V232.8M290.4,239.3V242.0M291.5,238.9V241.7M299.5,248.7V253.6M300.3,252.8V263.5M302.8,257.7V260.7M303.9,254.8V258.8M313.3,264.6V268.5M315.2,269.0V277.5M321.5,277.9V287.0M324.7,276.6V279.6M325.8,278.3V282.4M335.9,277.3V286.5M338.3,269.4V273.9M339.6,270.1V276.3M340.8,275.2V278.2M347.0,277.0V280.5M348.2,274.4V278.0M357.9,264.0V270.4M360.2,251.7V261.4M365.1,249.6V261.7M369.2,259.6V264.7M372.4,249.6V255.2M374.6,243.2V266.8M380.7,269.8V274.1M386.5,286.5V296.8M391.1,264.2V279.8M393.9,257.1V270.8M402.2,258.6V265.5M403.0,254.2V259.4M412.1,263.7V266.7M415.9,278.3V282.1M417.1,274.3V279.6M418.7,267.0V272.3M420.4,247.3V257.8M421.6,245.5V248.5M425.3,251.8V261.3M427.8,263.2V269.0M433.3,262.7V266.9M434.4,260.9V264.2M438.8,264.3V268.8M439.9,259.5V264.9M442.7,255.9V258.1M443.9,249.0V258.2M445.2,240.0V249.6M447.2,256.0V261.2M448.5,252.2V257.6M453.4,249.4V259.3M455.1,254.1V260.1M458.4,269.4V273.4M475.7,296.8V300.8M477.4,280.4V297.0M478.6,278.0V281.8M479.8,276.9V279.1M485.6,302.2V308.3M486.5,296.2V308.1M487.3,287.7V297.2M488.1,283.9V288.2M488.9,281.9V285.6M492.6,276.9V279.9M496.8,271.8V274.5M498.8,269.6V272.4" stroke="#ff1010" stroke-width="1.6" fill="none"/><path d="M601.3,316.9H603.8M602.2,312.5H604.7M603.2,307.2H605.7M607.6,286.6H610.1M608.8,284.7V287.8M622.3,327.7H624.8M626.7,298.4H629.2M631.5,248.2H634.0M632.7,247.1V248.8M634.0,304.2H636.5M665.9,269.5H668.4M668.1,275.8H670.6M669.3,274.9V276.4M682.0,319.2H684.5M685.8,327.2H688.3M687.0,326.4V327.7M687.8,348.3H690.3M692.7,342.4H695.2M697.8,333.0H700.3M699.0,331.5V333.9M700.0,336.5H702.5M701.2,335.6V337.1M706.3,345.2H708.8M707.5,343.7V346.1M709.3,360.3H711.8M711.3,355.1H713.8M713.2,333.6H715.7M714.4,331.8V334.7M725.7,328.7H728.2M726.9,327.2V329.6M732.1,326.0H734.6M733.1,325.7H735.6M736.2,322.8H738.7M737.4,321.0V323.9" stroke="#e0d478" stroke-width="1.2" fill="none"/><path d="M605.5,302.1V307.8M608.8,286.6V304.2M611.0,298.9V301.8M614.0,294.4V303.6M614.7,303.3V313.5M619.1,285.9V292.8M619.1,286.6V307.2M620.2,307.2V314.1M622.4,317.0V323.6M624.6,326.8V335.5M625.8,334.3V343.4M633.7,248.1V260.2M639.3,265.8V285.4M640.5,285.2V304.7M645.0,254.3V257.7M645.9,256.8V259.6M646.9,258.2V263.5M648.9,265.3V270.0M649.9,269.4V272.7M651.0,261.9V272.3M654.3,265.3V281.6M655.3,274.0V281.8M659.2,260.8V266.9M660.2,265.5V269.0M664.1,259.7V264.4M665.0,263.2V267.1M666.0,266.2V269.5M668.2,268.6V274.5M670.4,274.9V278.0M672.4,280.7V285.2M673.4,284.7V288.3M679.2,306.7V310.2M682.2,318.8V324.9M685.1,309.9V314.4M685.1,310.1V339.4M688.0,321.8V342.4M690.0,347.6V354.4M691.0,352.7V360.6M691.0,360.0V380.5M692.0,368.0V380.6M704.2,327.7V339.4M708.6,344.4V349.0M709.6,347.5V353.5M711.5,359.7V366.5M713.4,343.6V355.4M715.4,306.7V308.7M716.4,308.2V310.2M717.4,309.7V313.6M719.3,315.8V319.9M720.3,319.3V322.7M724.7,295.5V316.1M725.8,315.1V323.2M727.8,324.6V329.0M728.8,321.8V325.7M732.4,310.8V315.2M732.4,311.2V325.0M738.5,319.5V334.2M740.7,338.6V343.3M746.2,338.7V348.7M747.1,347.4V358.0M748.0,356.5V359.1M749.0,358.3V361.7" stroke="#1e78e8" stroke-width="1.6" fill="none"/><path d="M606.6,296.1V302.4M612.1,296.5V299.4M613.2,294.7V297.4M616.9,298.5V306.6M618.0,291.2V299.7M625.8,310.0V342.4M626.8,303.9V310.3M629.3,273.9V299.1M630.5,256.1V275.8M631.7,235.9V256.5M635.2,277.8V304.2M636.2,274.9V278.2M638.1,265.5V270.6M640.5,283.7V304.2M642.2,266.7V276.7M643.1,261.0V267.3M644.0,253.4V262.1M652.2,251.0V263.1M653.2,251.3V265.6M656.2,264.6V274.9M657.2,257.0V265.3M658.2,256.4V261.6M662.1,262.6V266.2M663.1,259.6V264.1M671.4,276.9V282.5M674.4,287.5V298.5M675.3,297.1V306.1M676.3,305.1V313.0M676.3,301.3V313.0M677.3,300.9V305.2M684.1,314.3V319.7M686.1,333.0V339.7M688.0,321.6V327.7M694.9,337.7V342.7M695.8,333.2V338.5M696.8,330.3V334.5M703.2,330.2V334.2M704.2,326.8V331.1M706.4,339.8V346.5M714.4,307.2V333.6M722.9,302.2V311.0M723.8,296.3V303.2M729.7,319.3V323.7M730.6,316.3V319.9M731.5,314.0V317.0M735.2,325.0V328.2M736.3,323.8V328.6M738.5,318.8V323.1M739.6,334.0V339.1M742.5,346.1V349.0M743.5,338.5V349.6M744.4,329.5V339.8M745.3,329.5V339.5" stroke="#ff1010" stroke-width="1.6" fill="none"/><rect x="41.0" y="336.8" width="2" height="5.8" fill="#ff1010"/><rect x="58.5" y="322.0" width="2" height="3.0" fill="#ff1010"/><rect x="70.9" y="314.5" width="2" height="9.1" fill="#e0d478"/><rect x="95.6" y="303.0" width="2" height="19.8" fill="#1e78e8"/><rect x="500.6" y="278.8" width="2" height="11.5" fill="#e0d478"/><rect x="505.6" y="284.6" width="2" height="8.2" fill="#1e78e8"/><rect x="527.0" y="276.3" width="2" height="8.3" fill="#1e78e8"/><rect x="537.8" y="249.0" width="2" height="26.5" fill="#ff1010"/><rect x="542.7" y="246.0" width="2" height="3.0" fill="#ff1010"/><rect x="543.6" y="254.8" width="2" height="5.0" fill="#1e78e8"/><rect x="551.0" y="249.0" width="2" height="4.0" fill="#ff1010"/><rect x="551.8" y="246.6" width="2" height="17.3" fill="#1e78e8"/><rect x="552.6" y="269.7" width="2" height="5.8" fill="#1e78e8"/><rect x="571.6" y="259.0" width="2" height="4.0" fill="#ff1010"/><rect x="574.9" y="281.0" width="2" height="5.0" fill="#1e78e8"/><rect x="576.6" y="286.0" width="2" height="5.0" fill="#1e78e8"/><rect x="587.3" y="302.0" width="2" height="4.0" fill="#ff1010"/><rect x="592.3" y="279.6" width="2" height="5.0" fill="#ff1010"/><rect x="597.2" y="276.3" width="2" height="8.3" fill="#1e78e8"/><rect x="601.4" y="301.0" width="2" height="21.5" fill="#1e78e8"/><rect x="603.0" y="302.7" width="2" height="11.6" fill="#ff1010"/><rect x="608.0" y="284.6" width="2" height="16.4" fill="#ff1010"/><rect x="608.8" y="284.6" width="2" height="14.8" fill="#1e78e8"/><rect x="612.9" y="311.0" width="2" height="5.0" fill="#1e78e8"/><rect x="617.9" y="284.6" width="2" height="23.1" fill="#1e78e8"/><rect x="622.0" y="311.0" width="2" height="5.8" fill="#1e78e8"/><rect x="746.1" y="348.9" width="2" height="8.2" fill="#1e78e8"/><rect x="753.5" y="355.3" width="2" height="2.7" fill="#1e78e8"/><rect x="758.1" y="352.5" width="2" height="7.4" fill="#1e78e8"/><rect x="760.8" y="347.0" width="2" height="5.5" fill="#ff1010"/><rect x="767.3" y="342.4" width="2" height="3.7" fill="#ff1010"/><rect x="771.8" y="339.0" width="2" height="3.0" fill="#1e78e8"/><rect x="784.7" y="340.0" width="2" height="3.0" fill="#1e78e8"/><rect x="826.0" y="352.5" width="2" height="5.5" fill="#ff1010"/><rect x="831.5" y="334.2" width="2" height="8.2" fill="#ff1010"/><rect x="845.4" y="331.6" width="2" height="3.0" fill="#1e78e8"/><rect x="850.9" y="325.8" width="2" height="2.2" fill="#ff1010"/><rect x="854.5" y="331.6" width="2" height="3.0" fill="#1e78e8"/><rect x="859.2" y="323.0" width="2" height="2.0" fill="#ff1010"/><rect x="864.1" y="311.0" width="2" height="3.0" fill="#ff1010"/><rect x="887.6" y="308.2" width="2" height="11.7" fill="#1e78e8"/><rect x="896.4" y="302.5" width="2" height="2.5" fill="#ff1010"/><rect x="904.2" y="292.5" width="2" height="3.5" fill="#ff1010"/><rect x="919.4" y="299.4" width="2" height="5.1" fill="#ff1010"/><rect x="931.6" y="308.2" width="2" height="5.8" fill="#ff1010"/><rect x="963.9" y="299.4" width="2" height="23.4" fill="#1e78e8"/><rect x="8.9" y="325.5" width="2.2" height="1.6" fill="#e0d478"/><rect x="8.9" y="328.5" width="2.2" height="1.6" fill="#e0d478"/><rect x="24.6" y="325.2" width="2.2" height="1.6" fill="#e0d478"/><rect x="35.3" y="331.4" width="2.2" height="1.6" fill="#e0d478"/><rect x="41.1" y="334.7" width="2.2" height="1.6" fill="#e0d478"/><rect x="46.0" y="328.1" width="2.2" height="1.6" fill="#e0d478"/><rect x="50.2" y="331.4" width="2.2" height="1.6" fill="#e0d478"/><rect x="52.7" y="328.1" width="2.2" height="1.6" fill="#e0d478"/><rect x="54.3" y="336.8" width="2.2" height="1.6" fill="#e0d478"/><rect x="61.0" y="322.3" width="2.2" height="1.6" fill="#e0d478"/><rect x="65.0" y="331.4" width="2.2" height="1.6" fill="#e0d478"/><rect x="65.0" y="336.3" width="2.2" height="1.6" fill="#e0d478"/><rect x="72.5" y="331.4" width="2.2" height="1.6" fill="#e0d478"/><rect x="79.4" y="314.0" width="2.2" height="1.6" fill="#e0d478"/><rect x="85.7" y="315.7" width="2.2" height="1.6" fill="#e0d478"/><rect x="86.5" y="322.3" width="2.2" height="1.6" fill="#e0d478"/><rect x="497.3" y="269.2" width="2.2" height="1.6" fill="#e0d478"/><rect x="504.7" y="280.8" width="2.2" height="1.6" fill="#e0d478"/><rect x="510.5" y="298.9" width="2.2" height="1.6" fill="#e0d478"/><rect x="511.3" y="292.3" width="2.2" height="1.6" fill="#e0d478"/><rect x="517.1" y="284.1" width="2.2" height="1.6" fill="#e0d478"/><rect x="518.8" y="290.7" width="2.2" height="1.6" fill="#e0d478"/><rect x="521.3" y="284.1" width="2.2" height="1.6" fill="#e0d478"/><rect x="523.7" y="284.1" width="2.2" height="1.6" fill="#e0d478"/><rect x="530.3" y="284.1" width="2.2" height="1.6" fill="#e0d478"/><rect x="533.6" y="284.1" width="2.2" height="1.6" fill="#e0d478"/><rect x="537.0" y="281.5" width="2.2" height="1.6" fill="#e0d478"/><rect x="541.1" y="264.2" width="2.2" height="1.6" fill="#e0d478"/><rect x="546.9" y="258.5" width="2.2" height="1.6" fill="#e0d478"/><rect x="549.3" y="251.0" width="2.2" height="1.6" fill="#e0d478"/><rect x="555.1" y="269.2" width="2.2" height="1.6" fill="#e0d478"/><rect x="556.0" y="258.5" width="2.2" height="1.6" fill="#e0d478"/><rect x="559.2" y="264.2" width="2.2" height="1.6" fill="#e0d478"/><rect x="561.7" y="270.0" width="2.2" height="1.6" fill="#e0d478"/><rect x="562.6" y="279.1" width="2.2" height="1.6" fill="#e0d478"/><rect x="565.0" y="272.5" width="2.2" height="1.6" fill="#e0d478"/><rect x="568.3" y="269.2" width="2.2" height="1.6" fill="#e0d478"/><rect x="570.8" y="275.0" width="2.2" height="1.6" fill="#e0d478"/><rect x="575.8" y="290.7" width="2.2" height="1.6" fill="#e0d478"/><rect x="580.7" y="290.7" width="2.2" height="1.6" fill="#e0d478"/><rect x="581.5" y="295.6" width="2.2" height="1.6" fill="#e0d478"/><rect x="584.0" y="298.9" width="2.2" height="1.6" fill="#e0d478"/><rect x="585.7" y="300.6" width="2.2" height="1.6" fill="#e0d478"/><rect x="586.5" y="307.2" width="2.2" height="1.6" fill="#e0d478"/><rect x="589.0" y="287.4" width="2.2" height="1.6" fill="#e0d478"/><rect x="591.5" y="280.8" width="2.2" height="1.6" fill="#e0d478"/><rect x="593.1" y="269.2" width="2.2" height="1.6" fill="#e0d478"/><rect x="598.1" y="287.4" width="2.2" height="1.6" fill="#e0d478"/><rect x="598.9" y="292.3" width="2.2" height="1.6" fill="#e0d478"/><rect x="604.7" y="307.2" width="2.2" height="1.6" fill="#e0d478"/><rect x="611.3" y="295.6" width="2.2" height="1.6" fill="#e0d478"/><rect x="616.2" y="295.6" width="2.2" height="1.6" fill="#e0d478"/><rect x="622.8" y="322.9" width="2.2" height="1.6" fill="#e0d478"/><rect x="748.0" y="360.3" width="2.2" height="1.6" fill="#e0d478"/><rect x="750.7" y="348.4" width="2.2" height="1.6" fill="#e0d478"/><rect x="757.2" y="346.5" width="2.2" height="1.6" fill="#e0d478"/><rect x="762.7" y="334.6" width="2.2" height="1.6" fill="#e0d478"/><rect x="765.4" y="340.1" width="2.2" height="1.6" fill="#e0d478"/><rect x="770.0" y="330.9" width="2.2" height="1.6" fill="#e0d478"/><rect x="774.6" y="340.1" width="2.2" height="1.6" fill="#e0d478"/><rect x="778.3" y="343.8" width="2.2" height="1.6" fill="#e0d478"/><rect x="787.4" y="343.8" width="2.2" height="1.6" fill="#e0d478"/><rect x="789.3" y="346.5" width="2.2" height="1.6" fill="#e0d478"/><rect x="793.0" y="352.0" width="2.2" height="1.6" fill="#e0d478"/><rect x="795.7" y="346.5" width="2.2" height="1.6" fill="#e0d478"/><rect x="807.6" y="348.4" width="2.2" height="1.6" fill="#e0d478"/><rect x="809.5" y="352.0" width="2.2" height="1.6" fill="#e0d478"/><rect x="828.8" y="352.0" width="2.2" height="1.6" fill="#e0d478"/><rect x="830.6" y="345.5" width="2.2" height="1.6" fill="#e0d478"/><rect x="835.2" y="334.6" width="2.2" height="1.6" fill="#e0d478"/><rect x="839.8" y="331.8" width="2.2" height="1.6" fill="#e0d478"/><rect x="841.6" y="334.6" width="2.2" height="1.6" fill="#e0d478"/><rect x="835.5" y="334.1" width="2.2" height="1.6" fill="#e0d478"/><rect x="839.1" y="331.1" width="2.2" height="1.6" fill="#e0d478"/><rect x="841.3" y="334.8" width="2.2" height="1.6" fill="#e0d478"/><rect x="844.6" y="337.0" width="2.2" height="1.6" fill="#e0d478"/><rect x="848.7" y="331.1" width="2.2" height="1.6" fill="#e0d478"/><rect x="852.8" y="328.2" width="2.2" height="1.6" fill="#e0d478"/><rect x="860.1" y="319.4" width="2.2" height="1.6" fill="#e0d478"/><rect x="861.9" y="316.5" width="2.2" height="1.6" fill="#e0d478"/><rect x="867.8" y="305.5" width="2.2" height="1.6" fill="#e0d478"/><rect x="870.7" y="308.0" width="2.2" height="1.6" fill="#e0d478"/><rect x="877.3" y="309.5" width="2.2" height="1.6" fill="#e0d478"/><rect x="880.2" y="312.1" width="2.2" height="1.6" fill="#e0d478"/><rect x="884.6" y="311.3" width="2.2" height="1.6" fill="#e0d478"/><rect x="888.3" y="314.3" width="2.2" height="1.6" fill="#e0d478"/><rect x="894.2" y="304.7" width="2.2" height="1.6" fill="#e0d478"/><rect x="897.8" y="298.9" width="2.2" height="1.6" fill="#e0d478"/><rect x="905.9" y="295.9" width="2.2" height="1.6" fill="#e0d478"/><rect x="913.2" y="311.3" width="2.2" height="1.6" fill="#e0d478"/><rect x="915.4" y="304.7" width="2.2" height="1.6" fill="#e0d478"/><rect x="916.9" y="314.3" width="2.2" height="1.6" fill="#e0d478"/><rect x="921.3" y="301.8" width="2.2" height="1.6" fill="#e0d478"/><rect x="939.0" y="314.3" width="2.2" height="1.6" fill="#e0d478"/><rect x="942.6" y="315.0" width="2.2" height="1.6" fill="#e0d478"/><rect x="949.2" y="311.3" width="2.2" height="1.6" fill="#e0d478"/><rect x="950.0" y="319.4" width="2.2" height="1.6" fill="#e0d478"/><rect x="952.1" y="316.5" width="2.2" height="1.6" fill="#e0d478"/><rect x="961.0" y="302.5" width="2.2" height="1.6" fill="#e0d478"/><rect x="961.7" y="316.5" width="2.2" height="1.6" fill="#e0d478"/><rect x="967.6" y="311.3" width="2.2" height="1.6" fill="#e0d478"/><rect x="966.8" y="328.2" width="2.2" height="1.6" fill="#e0d478"/></g><clipPath id="c3"><rect x="5" y="408" width="968" height="119"/></clipPath><g clip-path="url(#c3)"><polyline points="6.6,470.6 7.5,466.8 8.3,466.4 9.1,464.0 9.9,460.6 10.8,463.2 11.6,463.1 12.9,460.6 14.0,465.6 14.8,464.5 15.7,464.8 16.5,464.2 17.3,467.3 18.1,469.3 19.0,471.4 19.8,470.8 20.6,468.9 21.5,472.1 22.3,472.2 23.6,469.2 24.8,469.7 26.1,467.5 27.3,468.9 28.5,471.9 29.7,473.0 30.5,474.2 31.4,476.3 32.2,474.7 33.5,478.1 34.7,478.8 36.0,476.6 37.2,474.7 38.0,471.8 38.8,469.7 40.0,472.5 41.3,468.1 42.5,468.1 43.8,468.9 45.0,468.7 46.3,470.6 47.1,470.2 47.9,473.0 49.1,471.9 50.4,470.6 51.6,470.8 52.9,470.6 54.1,469.7 55.3,469.7 56.5,468.8 57.8,468.1 58.6,467.2 59.5,465.6 60.8,472.2 61.8,470.3 62.8,466.4 64.0,467.5 65.2,465.6 66.1,462.6 66.9,459.0 67.7,455.6 68.5,457.3 69.8,458.7 71.0,458.2 71.8,462.4 72.7,470.6 73.5,467.5 74.3,464.8 75.2,461.5 76.0,462.3 77.2,464.0 78.5,465.6 79.7,469.1 80.9,474.7 82.2,472.5 83.4,469.7 84.7,474.8 85.9,470.6 87.2,468.4 88.4,466.4 89.6,467.6 90.8,466.4 92.0,463.3 93.3,464.0 94.2,464.8 95.0,466.4 95.8,463.2 96.6,458.2 97.4,463.0 98.3,468.1 99.5,467.0 100.8,464.8 102.0,467.0 103.2,468.9 104.5,467.9 105.7,469.7 107.0,475.4 108.2,479.6 109.0,474.4 109.8,471.4 111.0,473.6 112.3,470.6 113.2,474.4 114.0,479.6 115.2,482.7 116.5,483.8 117.7,484.6 118.9,485.4 120.2,484.7 121.4,481.3 122.2,483.0 123.1,486.3 124.3,483.9 125.5,478.8 126.4,478.6 127.4,480.6 128.3,478.8 129.4,481.3 130.5,482.3 131.6,483.8 132.7,483.5 133.8,486.5 134.9,486.3 136.0,488.1 137.1,490.8 138.2,489.6 139.4,490.3 140.7,492.0 141.5,496.1 142.3,498.6 143.2,496.5 144.0,492.9 145.1,492.5 146.2,491.5 147.3,490.4 148.6,489.4 149.8,487.9 151.1,488.3 152.3,490.4 153.4,487.9 154.5,487.6 155.6,487.1 156.8,489.2 158.0,489.6 159.2,494.6 160.5,495.3 161.6,496.1 162.7,495.7 163.8,493.7 165.1,498.5 166.3,501.1 167.6,496.3 168.8,489.6 169.9,491.0 171.0,492.9 172.1,492.9 173.2,496.5 174.3,494.6 175.4,496.2 176.7,498.5 177.9,502.8 179.0,504.4 180.1,500.9 181.2,499.5 182.3,500.0 183.4,499.1 184.5,497.0 185.7,493.4 186.9,492.9 188.0,496.2 189.1,495.1 190.2,492.5 191.3,493.1 192.5,494.4 193.6,493.7 194.8,497.6 196.0,501.1 197.2,501.1 198.5,503.6 199.8,504.6 201.0,506.0 202.1,508.5 203.2,511.5 204.3,511.9 205.6,508.7 206.8,503.6 207.9,503.4 209.0,505.0 210.1,502.8 211.3,502.1 212.5,503.6 213.6,502.5 214.8,500.8 215.9,497.0 217.1,497.4 218.3,498.6 219.4,494.2 220.5,493.5 221.6,492.9 222.8,495.3 224.1,497.0 225.2,497.5 226.3,498.6 227.4,496.2 228.7,495.2 229.9,497.0 231.2,503.2 232.4,509.4 233.5,510.8 234.6,510.2 235.7,511.0 236.8,509.3 237.9,515.5 239.0,516.0 240.1,520.9 241.2,520.7 242.3,520.9 243.4,518.5 244.5,518.1 245.6,517.6 246.6,516.7 247.6,518.6 248.7,514.8 249.7,512.7 250.6,511.5 251.6,512.1 252.5,508.5 253.6,508.7 254.7,511.7 255.8,509.4 256.6,504.7 257.4,502.0 258.6,500.1 259.9,499.5 260.8,503.8 261.6,506.1 262.8,506.0 264.0,502.0 265.1,504.5 266.2,505.7 267.3,506.9 268.6,500.6 269.8,499.5 270.6,497.7 271.5,497.8 272.8,499.0 274.0,502.0 275.1,502.1 276.2,504.4 277.3,504.4 278.4,502.8 279.5,503.3 280.6,501.1 281.7,502.3 282.8,502.8 283.9,504.4 285.1,502.5 286.3,500.3 287.4,501.2 288.5,502.0 289.6,501.1 290.9,498.4 292.1,497.0 293.2,499.1 294.3,500.0 295.4,504.4 296.5,504.4 297.6,502.0 298.7,497.8 299.8,496.2 300.9,494.4 302.0,493.7 303.2,494.0 304.5,497.8 305.6,496.4 306.7,494.8 307.8,492.9 308.9,495.4 310.0,492.1 311.1,491.2 312.2,488.7 313.3,485.0 314.4,487.1 315.5,486.3 316.6,481.8 317.7,478.8 318.9,479.4 320.2,484.6 321.3,484.9 322.4,482.3 323.5,484.6 324.6,489.7 325.7,486.7 326.8,485.4 328.1,483.3 329.3,479.6 330.4,478.6 331.5,475.0 332.6,477.2 333.9,477.8 335.1,478.8 335.9,480.8 336.7,487.1 337.8,487.7 338.9,483.6 340.0,486.3 341.1,486.3 342.1,490.5 343.1,492.3 344.2,491.2 345.4,486.6 346.6,485.4 347.7,483.1 348.7,486.2 349.8,486.0 350.8,484.6 351.8,483.6 352.9,484.5 353.9,484.9 354.9,486.3 356.0,485.4 357.1,486.9 358.2,488.7 359.3,495.2 360.4,499.1 361.5,502.8 362.6,502.9 363.7,497.1 364.8,494.5 366.1,491.4 367.3,488.7 368.2,488.0 369.1,489.9 370.0,490.8 371.1,491.2 372.2,492.7 373.3,497.4 374.1,492.9 375.0,486.4 375.9,487.0 376.9,484.8 377.9,484.1 378.8,480.9 379.9,481.6 381.0,480.6 382.1,482.0 383.2,481.3 384.3,479.8 385.4,478.0 386.5,478.7 387.6,478.2 388.7,480.3 389.8,484.2 390.6,487.5 391.5,490.8 392.3,488.3 393.1,485.3 394.2,506.2 395.0,507.2 395.9,509.5 396.8,509.7 397.7,506.1 398.6,504.0 399.7,505.5 400.8,507.2 401.9,506.2 403.0,501.0 404.1,495.4 405.2,494.1 406.3,495.7 407.4,495.2 408.3,491.7 409.3,491.9 410.2,487.5 411.1,489.6 412.1,492.2 413.1,493.5 414.0,494.1 415.1,486.3 416.3,484.3 417.2,487.5 418.2,487.7 419.2,489.8 420.1,493.0 421.0,490.9 421.9,491.1 422.8,488.6 423.9,492.6 425.0,494.1 425.9,492.2 426.9,485.2 427.8,483.4 428.7,481.0 429.8,479.6 430.9,484.7 432.0,486.8 433.2,487.6 434.5,486.8 435.3,479.1 436.1,473.6 437.1,474.6 438.1,475.2 439.2,476.9 440.2,476.1 441.0,478.7 441.9,483.5 443.1,477.0 444.4,472.8 445.6,476.7 446.9,482.7 447.7,481.9 448.5,476.1 449.6,474.6 450.7,469.9 451.8,467.0 452.9,470.6 454.0,473.8 455.1,476.9 456.4,474.3 457.6,471.1 458.7,469.2 459.8,467.4 460.9,466.2 462.1,459.5 463.4,456.3 464.5,456.5 465.6,460.8 466.7,459.6 467.8,461.5 468.9,461.9 470.0,462.9 471.2,460.1 472.5,457.9 473.3,454.7 474.1,451.3 475.4,453.4 476.6,454.6 477.9,458.6 479.1,464.5 479.9,466.4 480.7,467.8 481.5,462.8 482.4,457.1 483.6,454.4 484.8,453.8 486.1,448.9 487.3,446.3 488.1,449.1 489.0,454.6 490.2,456.8 491.5,462.0 492.7,462.4 493.9,460.4 495.0,459.0 496.1,463.9 497.2,466.2 498.1,466.1 499.1,466.9 500.0,468.6 501.2,464.6 502.5,460.3 503.8,464.8 505.0,466.1 506.2,460.5 507.4,454.6 508.6,453.2 509.9,452.1 511.0,451.0 512.1,451.4 513.2,451.3 514.3,452.0 515.4,449.6 516.5,449.6 517.4,447.2 518.2,448.0 519.4,449.1 520.6,453.7 521.9,449.3 523.1,448.0 524.4,446.9 525.6,449.6 526.9,453.2 528.1,453.7 529.2,454.2 530.3,453.4 531.4,453.7 532.5,453.8 533.6,449.0 534.7,448.0 535.8,447.1 536.9,445.3 538.0,442.2 539.2,443.7 540.5,449.6 541.7,447.0 542.9,448.8 544.1,450.4 545.4,454.6 546.6,454.6 547.9,452.1 549.0,454.4 550.1,451.4 551.2,453.7 552.5,454.8 553.7,452.9 554.5,446.2 555.3,440.5 556.5,439.9 557.8,440.5 558.6,445.9 559.5,452.9 560.6,453.3 561.7,452.0 562.8,455.4 564.0,449.0 565.2,445.5 566.5,446.7 567.7,451.3 568.8,451.4 569.9,453.1 571.0,449.6 572.2,454.3 573.5,451.3 574.4,455.8 575.2,461.2 576.4,450.9 577.6,445.5 578.7,445.2 579.8,444.7 580.9,446.3 582.0,446.0 583.1,441.0 584.2,437.2 585.3,434.5 586.4,435.2 587.5,432.3 588.8,433.9 590.0,433.9 590.9,434.5 591.7,439.7 593.0,436.9 594.2,435.6 595.0,439.4 595.8,443.8 596.9,441.1 598.0,438.5 599.1,435.6 600.1,433.5 601.1,432.3 602.2,428.4 603.2,424.0 604.5,429.4 605.7,436.4 607.0,436.4 608.2,438.9 609.0,450.4 610.2,447.2 611.5,439.7 612.8,439.8 614.0,438.9 615.2,435.0 616.5,429.8 617.3,429.6 618.1,433.9 619.1,442.1 620.2,452.0 621.2,457.5 622.2,467.8 623.5,460.2 624.7,449.6 625.0,438.0 626.2,442.9 627.5,448.8 628.8,449.0 630.0,448.0 631.2,442.8 632.4,438.0 633.6,438.3 634.9,438.0 635.9,449.2 636.9,457.0 638.0,448.2 639.0,440.5 639.9,441.4 640.7,438.0 642.0,441.1 643.2,446.3 644.4,443.7 645.6,443.8 646.9,439.8 648.1,433.9 649.0,438.6 649.8,446.3 650.6,447.0 651.4,448.8 652.3,426.5 653.4,427.5 654.5,427.6 655.6,425.6 656.7,423.7 657.8,427.4 658.9,427.3 660.1,431.2 661.3,429.8 662.5,432.7 663.8,432.3 664.9,429.5 666.0,426.5 667.1,424.8 668.4,428.1 669.6,432.3 670.9,434.4 672.1,439.7 673.4,436.0 674.6,433.1 675.8,427.4 677.0,422.3 677.9,417.6 678.7,413.3 680.0,418.3 681.2,419.9 682.4,420.4 683.6,421.5 684.9,422.0 686.1,426.5 686.9,436.4 688.1,432.1 689.4,424.8 690.6,425.8 691.9,429.8 693.0,420.9 694.0,413.3 695.0,418.9 696.0,424.8 696.9,431.4 697.7,438.9 699.0,433.7 700.2,431.4 701.3,431.6 702.4,435.6 703.5,433.1 704.7,433.1 705.9,434.7 706.8,439.9 707.6,445.5 708.4,440.5 709.2,432.3 710.5,439.9 711.7,445.5 712.8,449.9 713.9,453.3 715.0,455.4 716.1,449.3 717.2,447.6 718.3,445.5 719.4,449.0 720.5,452.8 721.6,455.4 722.9,458.5 724.1,457.9 725.2,455.8 726.3,452.0 727.4,449.6 728.5,446.6 729.6,443.2 730.7,440.5 732.0,447.0 733.2,452.9 734.5,447.2 735.7,439.7 736.8,437.9 737.9,435.8 739.0,435.6 740.1,434.1 741.2,436.5 742.3,434.7 743.4,438.7 744.5,440.5 745.6,441.3 746.9,438.0 748.1,432.3 749.0,433.0 750.0,431.4 751.1,433.1 752.2,435.7 753.3,436.4 754.4,432.7 755.5,431.7 756.6,429.8 757.9,426.3 759.1,424.8 760.4,424.2 761.6,421.5 762.4,421.5 763.2,423.2 764.0,426.3 764.9,429.8 766.1,433.7 767.3,436.4 768.4,436.4 769.5,431.4 770.6,430.6 771.9,430.5 773.1,433.1 774.2,435.9 775.3,434.8 776.4,438.0 777.5,437.2 778.5,434.4 779.5,433.6 780.6,432.3 781.7,430.9 782.8,435.5 783.9,435.6 784.9,435.5 786.0,435.5 787.0,440.3 788.0,438.0 789.0,438.8 790.0,442.5 791.1,438.0 792.1,437.2 793.1,436.7 794.2,437.4 795.2,439.4 796.3,437.2 797.4,439.4 798.5,442.2 799.6,443.8 800.8,442.5 802.0,439.7 803.1,440.4 804.2,443.7 805.3,445.5 806.4,442.0 807.5,438.2 808.6,437.2 809.7,438.7 810.8,438.7 811.9,438.0 813.1,439.8 814.4,441.3 815.2,438.0 816.1,437.2 817.1,436.0 818.2,441.2 819.2,442.0 820.2,443.8 821.2,441.2 822.2,443.3 823.3,441.1 824.3,443.0 825.3,443.1 826.3,443.5 827.3,444.0 828.3,443.9 829.3,443.8 830.4,444.9 831.5,443.9 832.6,446.3 833.4,450.7 834.2,456.2 835.5,452.6 836.7,450.4 837.8,449.3 838.9,449.2 840.0,448.0 841.0,447.8 842.1,448.2 843.2,441.3 844.2,443.8 845.3,445.2 846.4,445.2 847.5,446.3 848.7,451.1 849.9,449.6 851.0,450.9 852.0,447.3 853.0,450.2 854.1,449.6 855.3,452.6 856.5,457.0 857.8,455.5 859.0,451.3 860.0,451.8 861.0,455.1 862.0,457.1 863.0,459.1 864.0,461.2 865.1,457.9 866.2,453.6 867.3,453.7 868.5,456.8 869.8,458.7 871.0,457.7 872.1,453.9 873.1,454.8 874.1,455.9 875.0,452.2 876.0,451.6 876.9,449.0 878.0,449.4 879.2,447.9 880.3,447.7 881.3,446.6 882.4,445.6 883.5,445.9 884.5,442.2 885.5,442.0 886.5,444.9 887.5,441.7 888.6,440.1 890.0,437.4 891.3,441.5 892.3,437.4 893.4,438.7 894.3,439.6 895.3,441.3 896.2,444.2 897.1,441.7 898.0,441.0 898.9,440.8 899.8,442.8 900.6,439.5 901.5,439.1 902.4,438.7 903.3,442.5 904.2,440.0 905.1,440.8 906.2,439.7 907.2,443.5 908.3,445.7 909.5,445.5 910.6,448.4 911.5,450.0 912.5,445.3 913.4,446.3 914.4,442.4 915.4,440.1 916.5,439.6 917.5,443.5 918.5,440.9 919.6,438.0 920.6,440.0 921.6,444.9 922.7,441.4 923.7,438.0 924.6,437.7 925.5,437.6 926.4,438.7 927.3,441.9 928.3,443.7 929.2,444.2 930.2,442.7 931.2,439.8 932.3,438.1 933.3,438.0 934.2,439.3 935.0,443.1 935.9,440.0 936.8,441.5 937.9,441.8 939.1,443.3 940.2,445.6 941.2,444.2 942.2,444.6 943.3,445.8 944.3,446.3 945.3,449.3 946.4,448.3 947.5,448.7 948.5,450.4 949.4,451.1 950.3,456.7 951.2,459.4 952.6,453.9 953.7,451.1 954.7,448.4 955.6,446.9 956.5,447.3 957.4,449.0 958.3,449.2 959.3,450.9 960.2,449.7 961.2,454.0 962.2,456.6 963.2,452.4 964.3,447.7 965.3,444.8 966.4,442.9 967.4,440.9 968.4,438.0 969.8,447.7" fill="none" stroke="#ff0000" stroke-width="1.6" stroke-linejoin="round"/></g></svg></body></html>
